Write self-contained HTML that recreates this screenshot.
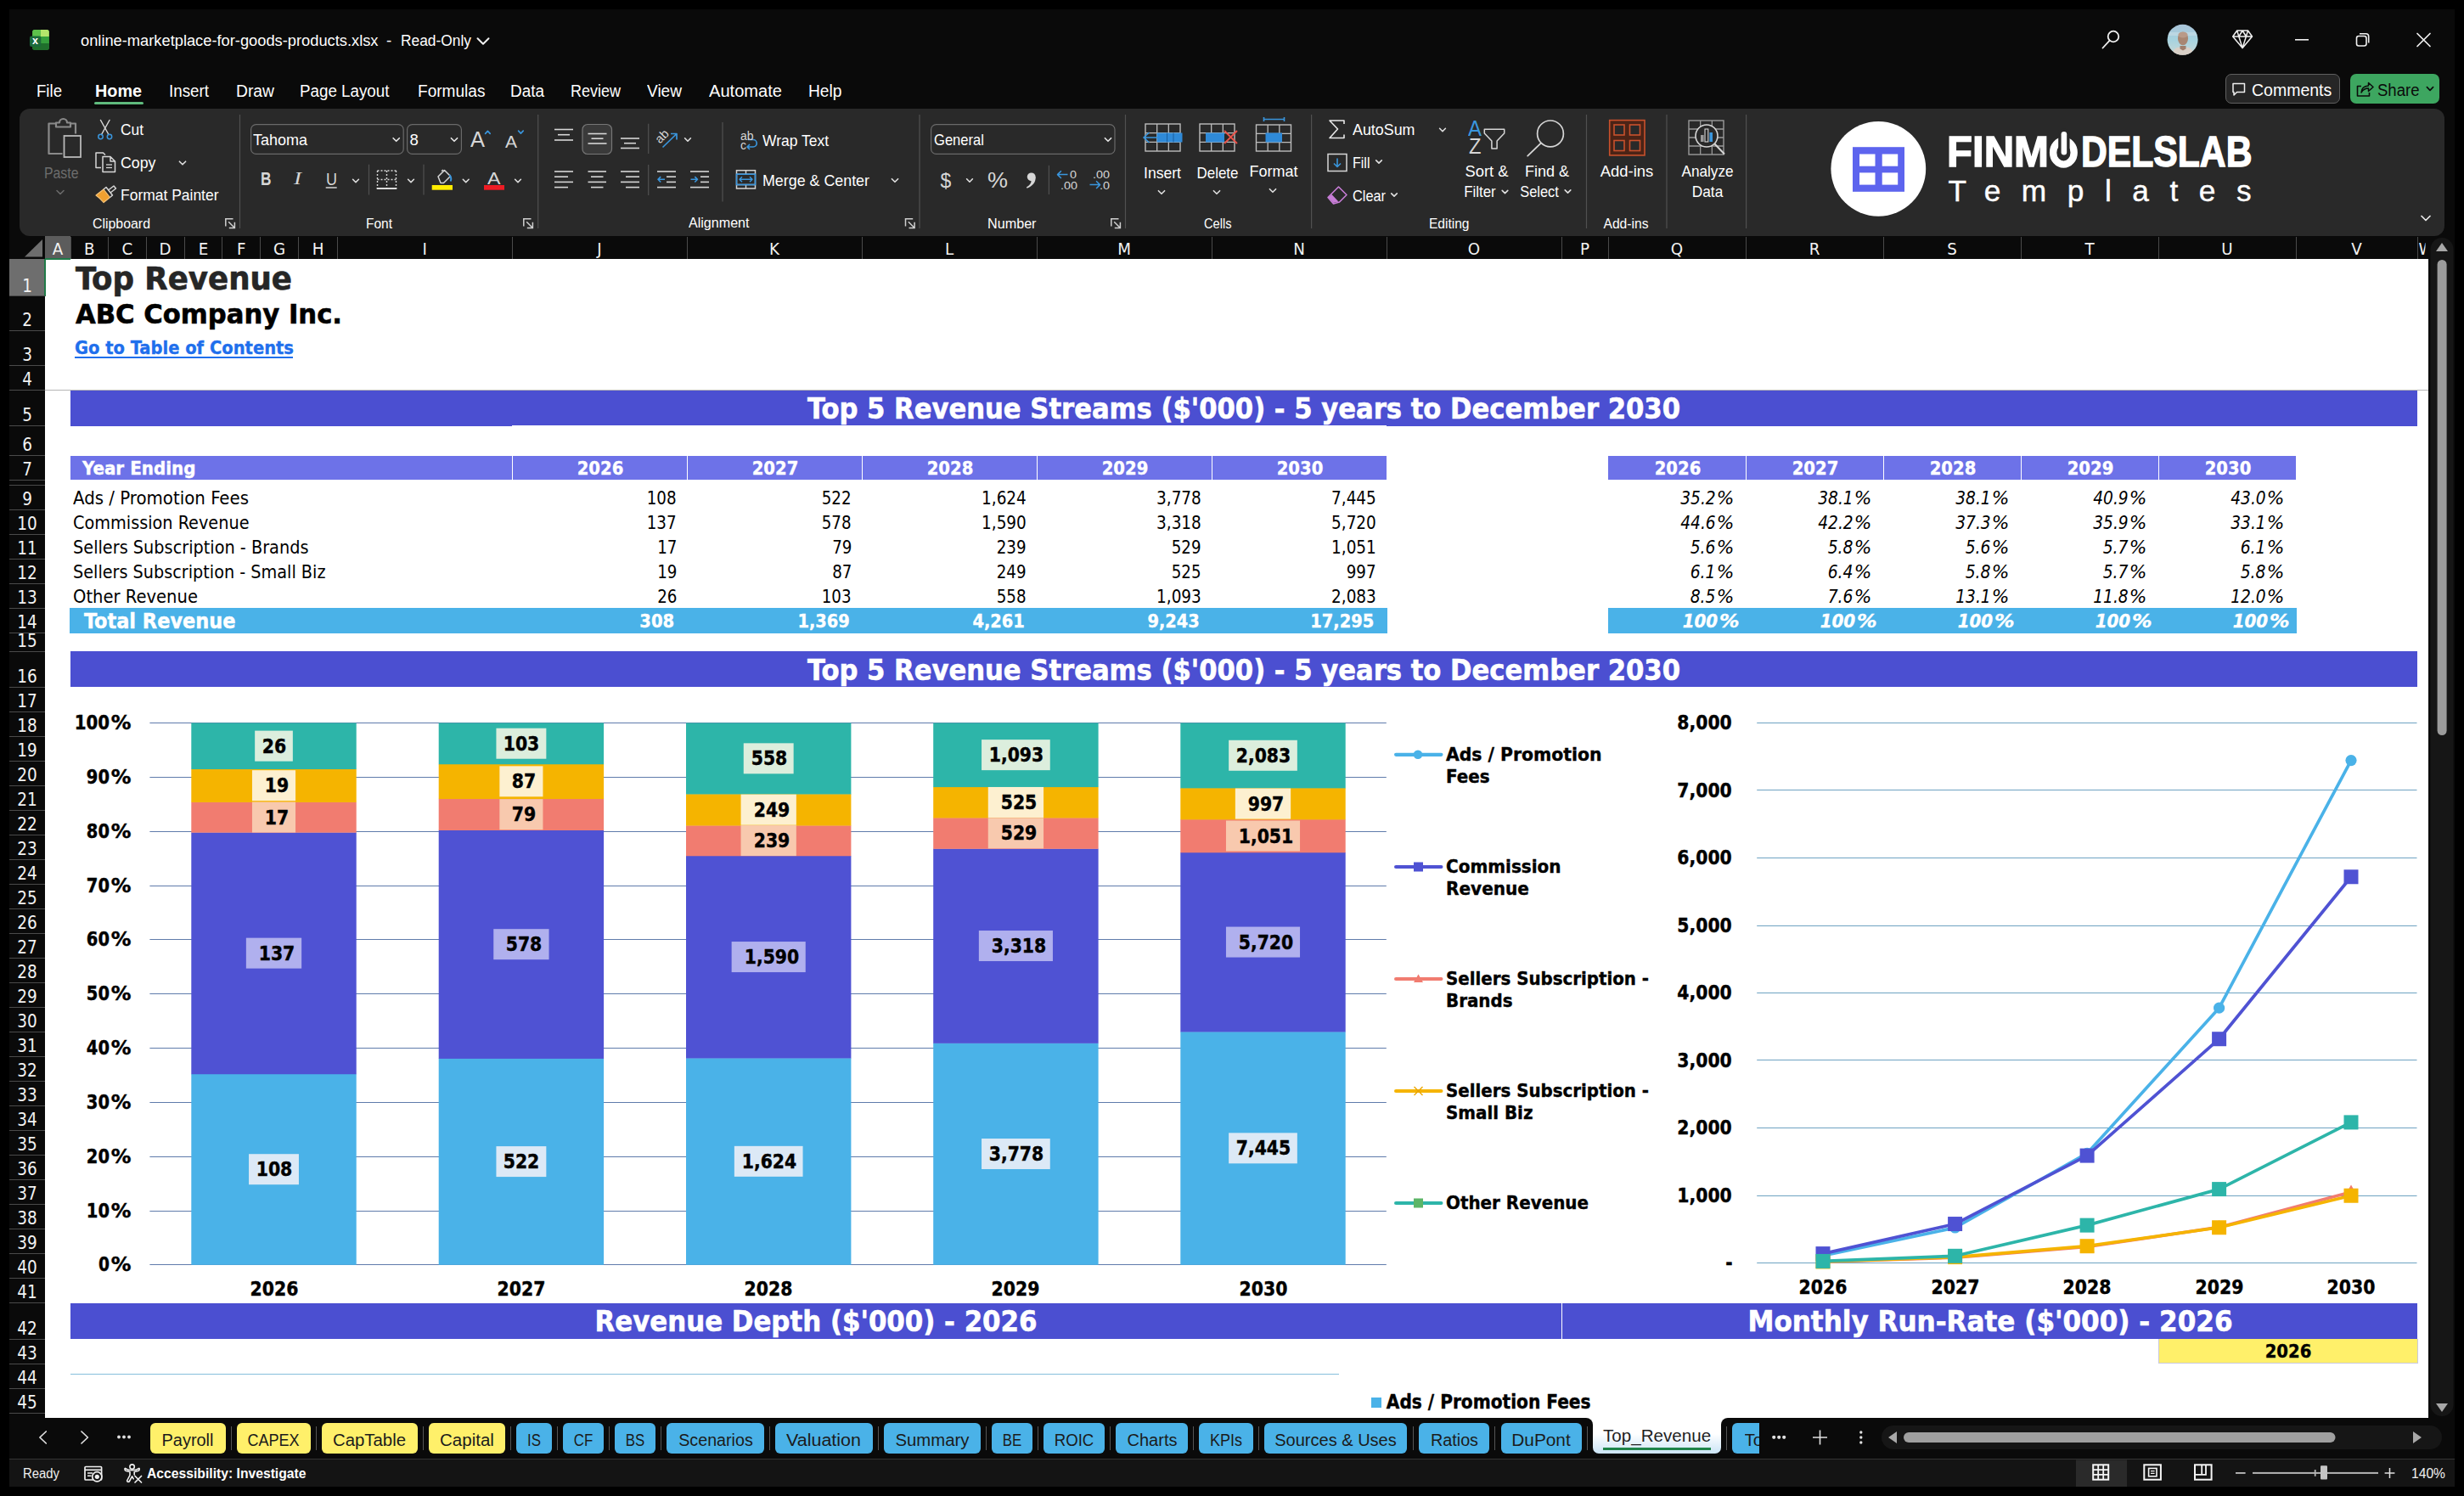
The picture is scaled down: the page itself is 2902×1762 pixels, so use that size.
<!DOCTYPE html>
<html lang="en"><head><meta charset="utf-8"><title>online-marketplace-for-goods-products.xlsx - Excel</title><style>
html,body{margin:0;padding:0;background:#000;}
body{width:2902px;height:1762px;position:relative;overflow:hidden;font-family:'Liberation Sans',sans-serif;}
#app div,#app span,#app svg{position:absolute;}
#app section{display:contents;}
#app span{white-space:nowrap;}
#app svg{overflow:visible;}
</style></head>
<body><div id="app">
<section id="window">
<div style="left:11px;top:11px;width:2880px;height:1740px;background:#0a0a0a;"></div>
</section>
<section id="titlebar">
<svg style="left:0px;top:0px;" width="2902" height="1762" viewBox="0 0 2902 1762"><rect x="38.2" y="35" width="19.6" height="23.8" rx="2.5" fill="#2f9438"/><path d="M38.2 43 v-5.5 a2.5 2.5 0 0 1 2.5 -2.5 h7.3 v8 z" fill="#5dc04b"/><path d="M48 35 h7.3 a2.5 2.5 0 0 1 2.5 2.5 v5.5 h-9.8 z" fill="#b4e66b"/><rect x="38.2" y="43" width="9.8" height="8" fill="#237f33"/><rect x="48" y="43" width="9.8" height="8" fill="#35a03c"/><path d="M38.2 51 h19.6 v5.3 a2.5 2.5 0 0 1 -2.5 2.5 h-14.6 a2.5 2.5 0 0 1 -2.5 -2.5 z" fill="#1f6f2c"/><rect x="35" y="42.5" width="13.3" height="12.4" rx="2" fill="#1b6a3b"/></svg>
<span id="t0" style="top:41.72px;font-size:12.5px;line-height:12.5px;color:#fff;font-weight:bold;left:41.6px;transform:translateX(-50%);">x</span>
<span id="t1" style="top:39px;font-size:18.8px;line-height:18.8px;color:#ffffff;left:95px;transform:scaleX(0.9732);transform-origin:0 50%;">online-marketplace-for-goods-products.xlsx</span>
<span id="t2" style="top:39px;font-size:18.8px;line-height:18.8px;color:#ffffff;left:455px;">-</span>
<span id="t3" style="top:39px;font-size:18.8px;line-height:18.8px;color:#ffffff;left:472px;transform:scaleX(0.9245);transform-origin:0 50%;">Read-Only</span>
<svg style="left:0px;top:0px;" width="2902" height="1762" viewBox="0 0 2902 1762"><path d="M562.5 45.25 l6.5 6.5 l6.5 -6.5" fill="none" stroke="#f0f0f0" stroke-width="2" stroke-linecap="round" stroke-linejoin="round"/><circle cx="2489" cy="43" r="6.3" fill="none" stroke="#f0f0f0" stroke-width="1.8"/><path d="M2484.5 47.8 L2476.5 56.5" stroke="#f0f0f0" stroke-width="1.8" stroke-linecap="round"/><defs><linearGradient id="av" x1="0" y1="0" x2="0" y2="1"><stop offset="0" stop-color="#a9c3d8"/><stop offset="0.5" stop-color="#a6d3df"/><stop offset="1" stop-color="#c9d8d6"/></linearGradient><clipPath id="avc"><circle cx="2570.6" cy="46.8" r="18"/></clipPath></defs><circle cx="2570.6" cy="46.8" r="18" fill="url(#av)"/><g clip-path="url(#avc)"><rect x="2552" y="38" width="38" height="4" fill="#c8dde8" opacity="0.6"/><ellipse cx="2571" cy="45.5" rx="6" ry="7.8" fill="#a88672"/><ellipse cx="2571" cy="41" rx="5.6" ry="3.6" fill="#b99a88"/><path d="M2558 66 q1 -9 8 -10.5 l5 3 l5 -3 q7 1.5 8 10.5 z" fill="#d9d0c7"/><path d="M2567.5 54 h7 v3.5 l-3.5 2 l-3.5 -2 z" fill="#a07f6c"/></g><path d="M2634.7 36 h12.8 l5 7 l-11.4 13.6 l-11.4 -13.6 z M2629.7 43 h22.8 M2636.8 43 l4.3 13.6 l4.3 -13.6 M2634.7 36 l2.1 7 l4.3 -7 l4.3 7 l2.1 -7" fill="none" stroke="#f0f0f0" stroke-width="1.5" stroke-linejoin="round"/><rect x="2703" y="46" width="16" height="1.6" fill="#f0f0f0"/><rect x="2775.5" y="42.5" width="11.5" height="11.5" rx="2.5" fill="none" stroke="#f0f0f0" stroke-width="1.6"/><path d="M2779 39.8 h7.5 a3.2 3.2 0 0 1 3.2 3.2 v7.5" fill="none" stroke="#f0f0f0" stroke-width="1.6"/><path d="M2847 39.5 l15 15 m0 -15 l-15 15" stroke="#f0f0f0" stroke-width="1.7" stroke-linecap="round"/></svg>
</section>
<section id="menubar">
<span id="t4" style="top:97.18px;font-size:20px;line-height:20px;color:#ffffff;left:42.5px;transform:scaleX(0.9307);transform-origin:0 50%;">File</span>
<span id="t5" style="top:97.18px;font-size:20px;line-height:20px;color:#ffffff;font-weight:bold;left:111.5px;transform:scaleX(0.9896);transform-origin:0 50%;">Home</span>
<span id="t6" style="top:97.18px;font-size:20px;line-height:20px;color:#ffffff;left:198.7px;transform:scaleX(0.9394);transform-origin:0 50%;">Insert</span>
<span id="t7" style="top:97.18px;font-size:20px;line-height:20px;color:#ffffff;left:277.5px;transform:scaleX(0.9642);transform-origin:0 50%;">Draw</span>
<span id="t8" style="top:97.18px;font-size:20px;line-height:20px;color:#ffffff;left:353px;transform:scaleX(0.9392);transform-origin:0 50%;">Page Layout</span>
<span id="t9" style="top:97.18px;font-size:20px;line-height:20px;color:#ffffff;left:491.7px;transform:scaleX(0.9537);transform-origin:0 50%;">Formulas</span>
<span id="t10" style="top:97.18px;font-size:20px;line-height:20px;color:#ffffff;left:600.6px;transform:scaleX(0.9467);transform-origin:0 50%;">Data</span>
<span id="t11" style="top:97.18px;font-size:20px;line-height:20px;color:#ffffff;left:671.7px;transform:scaleX(0.8997);transform-origin:0 50%;">Review</span>
<span id="t12" style="top:97.18px;font-size:20px;line-height:20px;color:#ffffff;left:762px;transform:scaleX(0.9535);transform-origin:0 50%;">View</span>
<span id="t13" style="top:97.18px;font-size:20px;line-height:20px;color:#ffffff;left:834.8px;transform:scaleX(1.0046);transform-origin:0 50%;">Automate</span>
<span id="t14" style="top:97.18px;font-size:20px;line-height:20px;color:#ffffff;left:951.7px;transform:scaleX(0.9601);transform-origin:0 50%;">Help</span>
<div style="left:111px;top:120px;width:58px;height:3px;background:#5fba7d;border-radius:1.5px;"></div>
<div style="left:2621px;top:87px;width:134.6px;height:35.4px;background:#262626;box-sizing:border-box;border:1.3px solid #606060;border-radius:7px;"></div>
<span id="t15" style="top:97px;font-size:19.5px;line-height:19.5px;color:#ffffff;left:2652px;">Comments</span>
<div style="left:2768px;top:87px;width:105px;height:35.4px;background:#3da660;border-radius:7px;"></div>
<span id="t16" style="top:97px;font-size:19.5px;line-height:19.5px;color:#0b0b0b;left:2799.5px;transform:scaleX(0.9511);transform-origin:0 50%;">Share</span>
<svg style="left:0px;top:0px;" width="2902" height="1762" viewBox="0 0 2902 1762"><path d="M2630 98.5 h13.5 v10 h-9 l-3.5 3.5 v-3.5 h-1 z" fill="none" stroke="#f0f0f0" stroke-width="1.5" stroke-linejoin="round"/><path d="M2781 101.5 h-4.5 v11.5 h14 v-4" fill="none" stroke="#0b0b0b" stroke-width="1.6" stroke-linejoin="round"/><path d="M2781 109 q0.5 -7.5 8.5 -8 v-3.5 l5.5 5 l-5.5 5 v-3.4 q-5.5 0 -8.5 4.9 z" fill="none" stroke="#0b0b0b" stroke-width="1.5" stroke-linejoin="round"/><path d="M2858.4 102.7 l3.6 3.6 l3.6 -3.6" fill="none" stroke="#0b0b0b" stroke-width="1.7" stroke-linecap="round" stroke-linejoin="round"/></svg>
</section>
<section id="ribbon">
<div style="left:23px;top:128px;width:2855.5px;height:149.5px;background:#292929;border-radius:12px;"></div>
<svg style="left:0px;top:0px;" width="2902" height="1762" viewBox="0 0 2902 1762"><rect x="281.9" y="135" width="1.2" height="134" fill="#505050"/><rect x="633.1" y="135" width="1.2" height="134" fill="#505050"/><rect x="1082.4" y="135" width="1.2" height="134" fill="#505050"/><rect x="1324.9" y="135" width="1.2" height="134" fill="#505050"/><rect x="1544" y="135" width="1.2" height="134" fill="#505050"/><rect x="1867.9" y="135" width="1.2" height="134" fill="#505050"/><rect x="1962.4" y="135" width="1.2" height="134" fill="#505050"/><rect x="2056" y="135" width="1.2" height="134" fill="#505050"/><rect x="433.9" y="193.7" width="1.2" height="35.8" fill="#505050"/><rect x="498.4" y="193.7" width="1.2" height="35.8" fill="#505050"/><rect x="763.1" y="145.7" width="1.2" height="35.3" fill="#505050"/><rect x="763.1" y="194" width="1.2" height="36" fill="#505050"/><rect x="850.4" y="144" width="1.2" height="93.5" fill="#505050"/><rect x="1234.8" y="194.8" width="1.2" height="34.2" fill="#505050"/><g fill="none" stroke="#8a8a8a" stroke-width="2.2" stroke-linejoin="round"><path d="M67 145.5 h-9.5 v35.5 h16"/><path d="M83 145.5 h6 v12"/><path d="M66 149.5 v-5 h4 a4.5 4.5 0 0 1 9 0 h4 v5 z"/></g><rect x="75.5" y="160" width="19.5" height="25" fill="none" stroke="#b8b8b8" stroke-width="1.8"/><path d="M67 224.5 l4 4 l4 -4" fill="none" stroke="#6a6a6a" stroke-width="1.6" stroke-linecap="round" stroke-linejoin="round"/><path d="M118.5 141.5 l9.5 17 M129 141.5 l-9.5 17" stroke="#d6d6d6" stroke-width="1.5" stroke-linecap="round"/><circle cx="118.5" cy="161" r="2.7" fill="none" stroke="#3a96dd" stroke-width="1.5"/><circle cx="129" cy="161" r="2.7" fill="none" stroke="#3a96dd" stroke-width="1.5"/><path d="M119 197.5 h-6 v-17.5 h8.5 l2.5 2.5" fill="none" stroke="#d6d6d6" stroke-width="1.5" stroke-linejoin="round"/><path d="M121 184.5 h9 l5.5 5.5 v12.5 h-14.5 z M130 184.5 v5.5 h5.5" fill="none" stroke="#d6d6d6" stroke-width="1.5" stroke-linejoin="round"/><path d="M125 194 H132" stroke="#d6d6d6" stroke-width="1.3"/><path d="M125 197.5 H132" stroke="#d6d6d6" stroke-width="1.3"/><path d="M211.4 190.2 l3.6 3.6 l3.6 -3.6" fill="none" stroke="#e0e0e0" stroke-width="1.6" stroke-linecap="round" stroke-linejoin="round"/><path d="M113 230 l9 -7 l7.5 9.5 l-7.5 6 q-4 -5 -9 -8.5 z" fill="#f0a030" stroke="#f5c37a" stroke-width="1.2" stroke-linejoin="round"/><path d="M122 223 l3 -2.5 l7.5 9.5 l-3 2.5 M127.5 224 l6.5 -5 l2.5 3 l-6.5 5" fill="none" stroke="#d6d6d6" stroke-width="1.5" stroke-linejoin="round"/><path d="M265.8 266.5 v-8.7 h8.7" fill="none" stroke="#d0d0d0" stroke-width="1.5"/><path d="M269.2 261.2 l7 7 M276.4 261.8 v6.6 h-6.6" fill="none" stroke="#d0d0d0" stroke-width="1.5"/><rect x="295.6" y="146.6" width="179.6" height="34.8" rx="6" fill="none" stroke="#6a6a6a" stroke-width="1.2"/><rect x="479.6" y="146.6" width="63.8" height="34.8" rx="6" fill="none" stroke="#6a6a6a" stroke-width="1.2"/><path d="M463.1 162.7 l3.6 3.6 l3.6 -3.6" fill="none" stroke="#e8e8e8" stroke-width="1.6" stroke-linecap="round" stroke-linejoin="round"/><path d="M531.4 162.7 l3.6 3.6 l3.6 -3.6" fill="none" stroke="#e8e8e8" stroke-width="1.6" stroke-linecap="round" stroke-linejoin="round"/><path d="M571.6 157.3 l2.8 -2.9 l2.8 2.9" fill="none" stroke="#3a96dd" stroke-width="1.7" stroke-linecap="round" stroke-linejoin="round"/><path d="M610.6 154.2 l2.8 2.9 l2.8 -2.9" fill="none" stroke="#3a96dd" stroke-width="1.7" stroke-linecap="round" stroke-linejoin="round"/><path d="M383.7 221 H396.7" stroke="#d6d6d6" stroke-width="1.5"/><path d="M415.6 211.3 l3.4 3.4 l3.4 -3.4" fill="none" stroke="#e0e0e0" stroke-width="1.6" stroke-linecap="round" stroke-linejoin="round"/><path d="M480.6 211.3 l3.4 3.4 l3.4 -3.4" fill="none" stroke="#e0e0e0" stroke-width="1.6" stroke-linecap="round" stroke-linejoin="round"/><path d="M545.3 211.3 l3.4 3.4 l3.4 -3.4" fill="none" stroke="#e0e0e0" stroke-width="1.6" stroke-linecap="round" stroke-linejoin="round"/><path d="M606.6 211.3 l3.4 3.4 l3.4 -3.4" fill="none" stroke="#e0e0e0" stroke-width="1.6" stroke-linecap="round" stroke-linejoin="round"/><g stroke="#d6d6d6" stroke-width="1.4" stroke-dasharray="2 2" fill="none"><path d="M444.5 201 h22 M444.5 201 v21 M466.5 201 v21 M455.5 201 v21 M444.5 211.5 h22"/></g><path d="M443.7 222 H467.3" stroke="#f0f0f0" stroke-width="1.8"/><path d="M516 208 l7.5 -7.5 l7 7 l-8 8 h-3.5 z M520 201.5 l2 -1.5" fill="none" stroke="#d6d6d6" stroke-width="1.5" stroke-linejoin="round"/><path d="M529.5 206 q3 4.5 1 7.5" fill="none" stroke="#3a96dd" stroke-width="2"/><rect x="508.7" y="218" width="24.3" height="5.7" fill="#ffec00"/><rect x="570" y="218" width="24" height="5.7" fill="#ee1c24"/><path d="M616.8 266.5 v-8.7 h8.7" fill="none" stroke="#d0d0d0" stroke-width="1.5"/><path d="M620.2 261.2 l7 7 M627.4 261.8 v6.6 h-6.6" fill="none" stroke="#d0d0d0" stroke-width="1.5"/><path d="M653 152.5 H675" stroke="#d6d6d6" stroke-width="1.6"/><path d="M657 158.7 H671" stroke="#d6d6d6" stroke-width="1.6"/><path d="M653 165 H675" stroke="#d6d6d6" stroke-width="1.6"/><path d="M692.5 157.5 H714.5" stroke="#d6d6d6" stroke-width="1.6"/><path d="M696.5 163.2 H710.5" stroke="#d6d6d6" stroke-width="1.6"/><path d="M692.5 169 H714.5" stroke="#d6d6d6" stroke-width="1.6"/><path d="M731 163 H753" stroke="#d6d6d6" stroke-width="1.6"/><path d="M735 168.7 H749" stroke="#d6d6d6" stroke-width="1.6"/><path d="M731 174.5 H753" stroke="#d6d6d6" stroke-width="1.6"/><rect x="686" y="146.5" width="34.5" height="35" rx="6" fill="#3a3a3a" stroke="#777" stroke-width="1.2"/><path d="M692.5 157.5 H714.5" stroke="#d6d6d6" stroke-width="1.6"/><path d="M696.5 163.2 H710.5" stroke="#d6d6d6" stroke-width="1.6"/><path d="M692.5 169 H714.5" stroke="#d6d6d6" stroke-width="1.6"/><path d="M653 202 H675" stroke="#d6d6d6" stroke-width="1.6"/><path d="M653 208.2 H669" stroke="#d6d6d6" stroke-width="1.6"/><path d="M653 214.4 H675" stroke="#d6d6d6" stroke-width="1.6"/><path d="M653 220.6 H669" stroke="#d6d6d6" stroke-width="1.6"/><path d="M692.5 202 H714" stroke="#d6d6d6" stroke-width="1.6"/><path d="M696 208.2 H710.5" stroke="#d6d6d6" stroke-width="1.6"/><path d="M692.5 214.4 H714" stroke="#d6d6d6" stroke-width="1.6"/><path d="M696 220.6 H710.5" stroke="#d6d6d6" stroke-width="1.6"/><path d="M731 202 H753" stroke="#d6d6d6" stroke-width="1.6"/><path d="M737 208.2 H753" stroke="#d6d6d6" stroke-width="1.6"/><path d="M731 214.4 H753" stroke="#d6d6d6" stroke-width="1.6"/><path d="M737 220.6 H753" stroke="#d6d6d6" stroke-width="1.6"/><path d="M774 202 H796" stroke="#d6d6d6" stroke-width="1.6"/><path d="M785 208.2 H796" stroke="#d6d6d6" stroke-width="1.6"/><path d="M785 214.4 H796" stroke="#d6d6d6" stroke-width="1.6"/><path d="M774 220.6 H796" stroke="#d6d6d6" stroke-width="1.6"/><path d="M783 211.3 h-8 m3.2 -3.2 l-3.2 3.2 l3.2 3.2" fill="none" stroke="#3a96dd" stroke-width="1.6" stroke-linejoin="round"/><path d="M813 202 H835" stroke="#d6d6d6" stroke-width="1.6"/><path d="M825 208.2 H835" stroke="#d6d6d6" stroke-width="1.6"/><path d="M825 214.4 H835" stroke="#d6d6d6" stroke-width="1.6"/><path d="M813 220.6 H835" stroke="#d6d6d6" stroke-width="1.6"/><path d="M813.5 211.3 h8 m-3.2 -3.2 l3.2 3.2 l-3.2 3.2" fill="none" stroke="#3a96dd" stroke-width="1.6" stroke-linejoin="round"/><path d="M780.5 173.5 l16.5 -16 m-7 0 h7 v7" fill="none" stroke="#3a96dd" stroke-width="1.7" stroke-linejoin="round"/><path d="M806.6 162.8 l3.4 3.4 l3.4 -3.4" fill="none" stroke="#e0e0e0" stroke-width="1.6" stroke-linecap="round" stroke-linejoin="round"/><path d="M881 164.5 h6 a4 4 0 0 1 0 8.5 h-7 m3 -3 l-3 3 l3 3" fill="none" stroke="#3a96dd" stroke-width="1.7" stroke-linejoin="round"/><rect x="867.5" y="200.7" width="22" height="21.3" fill="none" stroke="#d6d6d6" stroke-width="1.5"/><path d="M867.5 205.2 h22 M867.5 217.5 h22 M878.5 200.7 v4.5 M878.5 217.5 v4.5" stroke="#d6d6d6" stroke-width="1.4"/><rect x="867.5" y="205.2" width="22" height="12.3" fill="none" stroke="#3a96dd" stroke-width="1.6"/><path d="M871 211.3 h15 m-3 -3 l3 3 l-3 3 M874 208.3 l-3 3 l3 3" fill="none" stroke="#3a96dd" stroke-width="1.5" stroke-linejoin="round"/><path d="M1050.4 210.7 l3.6 3.6 l3.6 -3.6" fill="none" stroke="#e0e0e0" stroke-width="1.6" stroke-linecap="round" stroke-linejoin="round"/><path d="M1066.5 266.5 v-8.7 h8.7" fill="none" stroke="#d0d0d0" stroke-width="1.5"/><path d="M1069.9 261.2 l7 7 M1077.1 261.8 v6.6 h-6.6" fill="none" stroke="#d0d0d0" stroke-width="1.5"/><rect x="1096.6" y="146.6" width="216.4" height="34.8" rx="6" fill="none" stroke="#6a6a6a" stroke-width="1.2"/><path d="M1301.4 162.7 l3.6 3.6 l3.6 -3.6" fill="none" stroke="#e8e8e8" stroke-width="1.6" stroke-linecap="round" stroke-linejoin="round"/><path d="M1138.6 210.8 l3.4 3.4 l3.4 -3.4" fill="none" stroke="#e0e0e0" stroke-width="1.6" stroke-linecap="round" stroke-linejoin="round"/><path d="M1257.5 205.6 h-12 m4.4 -4.4 l-4.4 4.4 l4.4 4.4" fill="none" stroke="#3a96dd" stroke-width="1.5" stroke-linejoin="round"/><path d="M1283.5 217.6 h12 m-4.4 -4.4 l4.4 4.4 l-4.4 4.4" fill="none" stroke="#3a96dd" stroke-width="1.5" stroke-linejoin="round"/><circle cx="1214.7" cy="208.3" r="4.9" fill="#d6d6d6"/><path d="M1219.6 208.3 C1220.2 214.5 1216 219.5 1209.6 221.8 L1208.9 220.5 C1212.8 218.3 1214.8 215.5 1214.6 212.5 Z" fill="#d6d6d6"/><path d="M1308.8 266.5 v-8.7 h8.7" fill="none" stroke="#d0d0d0" stroke-width="1.5"/><path d="M1312.2 261.2 l7 7 M1319.4 261.8 v6.6 h-6.6" fill="none" stroke="#d0d0d0" stroke-width="1.5"/><rect x="1349" y="146" width="41" height="32" fill="none" stroke="#bdbdbd" stroke-width="1.4"/><path d="M1362.67 146 v32" stroke="#bdbdbd" stroke-width="1.3"/><path d="M1376.33 146 v32" stroke="#bdbdbd" stroke-width="1.3"/><path d="M1349 156.67 h41" stroke="#bdbdbd" stroke-width="1.3"/><path d="M1349 167.33 h41" stroke="#bdbdbd" stroke-width="1.3"/><rect x="1362.5" y="156.5" width="30" height="11" fill="#2f8ad8"/><path d="M1374.5 156.5 v11 M1382 156.5 v11" stroke="#1a5fa0" stroke-width="1"/><path d="M1363 162 h-16 m6.5 -6 l-6.5 6 l6.5 6" fill="none" stroke="#3a96dd" stroke-width="1.7" stroke-linejoin="round"/><rect x="1413" y="146" width="41" height="32" fill="none" stroke="#bdbdbd" stroke-width="1.4"/><path d="M1426.67 146 v32" stroke="#bdbdbd" stroke-width="1.3"/><path d="M1440.33 146 v32" stroke="#bdbdbd" stroke-width="1.3"/><path d="M1413 156.67 h41" stroke="#bdbdbd" stroke-width="1.3"/><path d="M1413 167.33 h41" stroke="#bdbdbd" stroke-width="1.3"/><rect x="1420" y="156.5" width="22" height="11" fill="#2f8ad8"/><path d="M1442 154 l15 15 m0 -15 l-15 15" stroke="#e8534a" stroke-width="1.9"/><rect x="1479.5" y="147" width="41" height="31" fill="none" stroke="#bdbdbd" stroke-width="1.4"/><path d="M1493.17 147 v31" stroke="#bdbdbd" stroke-width="1.3"/><path d="M1506.83 147 v31" stroke="#bdbdbd" stroke-width="1.3"/><path d="M1479.5 157.33 h41" stroke="#bdbdbd" stroke-width="1.3"/><path d="M1479.5 167.67 h41" stroke="#bdbdbd" stroke-width="1.3"/><rect x="1490.5" y="156.5" width="19.5" height="11" fill="#2f8ad8"/><path d="M1488.5 140.5 h24 M1488.5 138 v5 M1512.5 138 v5" stroke="#3a96dd" stroke-width="1.6"/><path d="M1364.4 224.7 l3.6 3.6 l3.6 -3.6" fill="none" stroke="#e0e0e0" stroke-width="1.6" stroke-linecap="round" stroke-linejoin="round"/><path d="M1429.4 224.7 l3.6 3.6 l3.6 -3.6" fill="none" stroke="#e0e0e0" stroke-width="1.6" stroke-linecap="round" stroke-linejoin="round"/><path d="M1495.4 222.7 l3.6 3.6 l3.6 -3.6" fill="none" stroke="#e0e0e0" stroke-width="1.6" stroke-linecap="round" stroke-linejoin="round"/><path d="M1583 146 v-4 h-17 l9.5 10 l-9.5 10.5 h17 v-4" fill="none" stroke="#e8e8e8" stroke-width="1.6" stroke-linejoin="round"/><path d="M1695.6 151.3 l3.4 3.4 l3.4 -3.4" fill="none" stroke="#e0e0e0" stroke-width="1.6" stroke-linecap="round" stroke-linejoin="round"/><path d="M1564 187 v-5.5 h22 v20 h-22 v-14.5" fill="none" stroke="#d6d6d6" stroke-width="1.5"/><path d="M1575 186.5 v10 m-4 -4 l4 4 l4 -4" fill="none" stroke="#3a96dd" stroke-width="1.6" stroke-linejoin="round"/><path d="M1620.7 188.85 l3.3 3.3 l3.3 -3.3" fill="none" stroke="#e0e0e0" stroke-width="1.6" stroke-linecap="round" stroke-linejoin="round"/><path d="M1564 232.5 l12.5 -12.5 l9.5 9.5 l-8.5 8.5 l-7 2 z" fill="none" stroke="#c77dd6" stroke-width="1.6" stroke-linejoin="round"/><path d="M1564.5 232.5 l6 6.5 l6 -1.5 l-8 -8.5 z" fill="#c77dd6"/><path d="M1638.7 227.85 l3.3 3.3 l3.3 -3.3" fill="none" stroke="#e0e0e0" stroke-width="1.6" stroke-linecap="round" stroke-linejoin="round"/><path d="M1748.3 152.3 h23.4 v4.6 l-8.6 9 v9 h-6.2 v-9 l-8.6 -9 z" fill="none" stroke="#d6d6d6" stroke-width="1.5" stroke-linejoin="round"/><path d="M1769.2 224.35 l3.3 3.3 l3.3 -3.3" fill="none" stroke="#e0e0e0" stroke-width="1.6" stroke-linecap="round" stroke-linejoin="round"/><circle cx="1826" cy="157.4" r="15.4" fill="none" stroke="#d6d6d6" stroke-width="1.7"/><path d="M1814.8 168.6 l-15.6 15" stroke="#d6d6d6" stroke-width="1.8" stroke-linecap="round"/><path d="M1843.2 223.85 l3.3 3.3 l3.3 -3.3" fill="none" stroke="#e0e0e0" stroke-width="1.6" stroke-linecap="round" stroke-linejoin="round"/><rect x="1895.7" y="141.6" width="41.3" height="41.3" fill="#4b2316" stroke="#c9512c" stroke-width="1.6"/><rect x="1901" y="147" width="12" height="12" fill="#292929" stroke="#c9512c" stroke-width="1.6"/><rect x="1919.5" y="147" width="12" height="12" fill="#292929" stroke="#c9512c" stroke-width="1.6"/><rect x="1901" y="165.5" width="12" height="12" fill="#292929" stroke="#c9512c" stroke-width="1.6"/><rect x="1919.5" y="165.5" width="12" height="12" fill="#292929" stroke="#c9512c" stroke-width="1.6"/><rect x="1989" y="142" width="41" height="40" fill="none" stroke="#9a9a9a" stroke-width="1.4"/><path d="M2002.67 142 v40" stroke="#9a9a9a" stroke-width="1.3"/><path d="M2016.33 142 v40" stroke="#9a9a9a" stroke-width="1.3"/><path d="M1989 152 h41" stroke="#9a9a9a" stroke-width="1.3"/><path d="M1989 162 h41" stroke="#9a9a9a" stroke-width="1.3"/><path d="M1989 172 h41" stroke="#9a9a9a" stroke-width="1.3"/><circle cx="2010" cy="160" r="13" fill="#292929" stroke="#d6d6d6" stroke-width="1.6"/><path d="M2019.5 169.5 l11.5 12" stroke="#d6d6d6" stroke-width="2"/><rect x="2003" y="159" width="3.6" height="8" fill="#9a9a9a"/><rect x="2008" y="152" width="3.8" height="15" fill="none" stroke="#d6d6d6" stroke-width="1.1"/><rect x="2013.4" y="156" width="3.6" height="11" fill="#3a96dd"/><path d="M2852 254.5 l5 5 l5 -5" fill="none" stroke="#e8e8e8" stroke-width="1.7" stroke-linecap="round" stroke-linejoin="round"/><circle cx="2212.3" cy="198.8" r="55.9" fill="#fff"/><rect x="2182" y="173.2" width="61" height="52.6" fill="#5d64ee"/><rect x="2190" y="181.5" width="18.5" height="14.2" fill="#fff"/><rect x="2216.7" y="181.5" width="18.5" height="14.2" fill="#fff"/><rect x="2190" y="203.4" width="18.5" height="14.2" fill="#fff"/><rect x="2216.7" y="203.4" width="18.5" height="14.2" fill="#fff"/></svg>
<span id="t17" style="top:194.66px;font-size:18.6px;line-height:18.6px;color:#6d6d6d;left:52px;transform:scaleX(0.8518);transform-origin:0 50%;">Paste</span>
<span id="t18" style="top:144.16px;font-size:18.6px;line-height:18.6px;color:#fff;left:142px;transform:scaleX(0.933);transform-origin:0 50%;">Cut</span>
<span id="t19" style="top:183.16px;font-size:18.6px;line-height:18.6px;color:#fff;left:142px;transform:scaleX(0.9557);transform-origin:0 50%;">Copy</span>
<span id="t20" style="top:221.16px;font-size:18.6px;line-height:18.6px;color:#fff;left:142px;transform:scaleX(0.9393);transform-origin:0 50%;">Format Painter</span>
<span id="t21" style="top:255.69px;font-size:16.8px;line-height:16.8px;color:#fff;left:109px;transform:scaleX(0.9465);transform-origin:0 50%;">Clipboard</span>
<span id="t22" style="top:155.86px;font-size:18.6px;line-height:18.6px;color:#fff;left:298px;transform:scaleX(0.9674);transform-origin:0 50%;">Tahoma</span>
<span id="t23" style="top:155.86px;font-size:18.6px;line-height:18.6px;color:#fff;left:482.5px;">8</span>
<span id="t24" style="top:152.25px;font-size:25px;line-height:25px;color:#d6d6d6;left:554px;transform:scaleX(1.0187);transform-origin:0 50%;">A</span>
<span id="t25" style="top:155.63px;font-size:21px;line-height:21px;color:#d6d6d6;left:595px;">A</span>
<span id="t26" style="top:199.79px;font-size:22px;line-height:22px;color:#d6d6d6;font-weight:bold;left:307px;transform:scaleX(0.7866);transform-origin:0 50%;">B</span>
<span id="t27" style="top:198.89px;font-size:22px;line-height:22px;color:#d6d6d6;font-family:'Liberation Serif',serif;font-style:italic;left:346px;transform:scaleX(1.2281);transform-origin:0 50%;">I</span>
<span id="t28" style="top:199.63px;font-size:21px;line-height:21px;color:#d6d6d6;left:383.7px;transform:scaleX(0.8568);transform-origin:0 50%;">U</span>
<span id="t29" style="top:198.63px;font-size:21px;line-height:21px;color:#d6d6d6;left:574.3px;transform:scaleX(1.1059);transform-origin:0 50%;">A</span>
<span id="t30" style="top:255.69px;font-size:16.8px;line-height:16.8px;color:#fff;left:430.5px;transform:scaleX(0.9228);transform-origin:0 50%;">Font</span>
<span id="t31" style="top:157.13px;font-size:14.5px;line-height:14.5px;color:#d6d6d6;left:778.5px;transform:rotate(-45deg);transform-origin:0 100%;">ab</span>
<span id="t32" style="top:152.56px;font-size:14px;line-height:14px;color:#d6d6d6;left:872px;">ab</span>
<span id="t33" style="top:163.56px;font-size:14px;line-height:14px;color:#d6d6d6;left:872px;">c</span>
<span id="t34" style="top:157.16px;font-size:18.6px;line-height:18.6px;color:#fff;left:897.5px;transform:scaleX(0.9394);transform-origin:0 50%;">Wrap Text</span>
<span id="t35" style="top:204.16px;font-size:18.6px;line-height:18.6px;color:#fff;left:897.5px;transform:scaleX(0.96);transform-origin:0 50%;">Merge &amp; Center</span>
<span id="t36" style="top:255.29px;font-size:16.8px;line-height:16.8px;color:#fff;left:810.5px;transform:scaleX(0.9581);transform-origin:0 50%;">Alignment</span>
<span id="t37" style="top:155.86px;font-size:18.6px;line-height:18.6px;color:#fff;left:1099.5px;transform:scaleX(0.8918);transform-origin:0 50%;">General</span>
<span id="t38" style="top:201.94px;font-size:23px;line-height:23px;color:#d6d6d6;left:1107.5px;">$</span>
<span id="t39" style="top:200.25px;font-size:25px;line-height:25px;color:#d6d6d6;left:1163px;transform:scaleX(1.0794);transform-origin:0 50%;">%</span>
<span id="t40" style="top:199.48px;font-size:13.5px;line-height:13.5px;color:#d6d6d6;left:1259.5px;transform:scaleX(1.0644);transform-origin:0 50%;">0</span>
<span id="t41" style="top:211.78px;font-size:13.5px;line-height:13.5px;color:#d6d6d6;left:1248.5px;transform:scaleX(1.0649);transform-origin:0 50%;">.00</span>
<span id="t42" style="top:199.48px;font-size:13.5px;line-height:13.5px;color:#d6d6d6;left:1287px;transform:scaleX(1.0649);transform-origin:0 50%;">.00</span>
<span id="t43" style="top:211.78px;font-size:13.5px;line-height:13.5px;color:#d6d6d6;left:1295px;transform:scaleX(1.0652);transform-origin:0 50%;">.0</span>
<span id="t44" style="top:255.69px;font-size:16.8px;line-height:16.8px;color:#fff;left:1163px;transform:scaleX(0.9634);transform-origin:0 50%;">Number</span>
<span id="t45" style="top:195.36px;font-size:18.6px;line-height:18.6px;color:#fff;left:1369px;transform:translateX(-50%) scaleX(0.9459);transform-origin:50% 50%;">Insert</span>
<span id="t46" style="top:195.36px;font-size:18.6px;line-height:18.6px;color:#fff;left:1434.3px;transform:translateX(-50%) scaleX(0.9116);transform-origin:50% 50%;">Delete</span>
<span id="t47" style="top:192.96px;font-size:18.6px;line-height:18.6px;color:#fff;left:1500.3px;transform:translateX(-50%) scaleX(0.9679);transform-origin:50% 50%;">Format</span>
<span id="t48" style="top:255.69px;font-size:16.8px;line-height:16.8px;color:#fff;left:1418px;transform:scaleX(0.871);transform-origin:0 50%;">Cells</span>
<span id="t49" style="top:144.16px;font-size:18.6px;line-height:18.6px;color:#fff;left:1593.3px;transform:scaleX(0.961);transform-origin:0 50%;">AutoSum</span>
<span id="t50" style="top:183.16px;font-size:18.6px;line-height:18.6px;color:#fff;left:1593.3px;transform:scaleX(0.8626);transform-origin:0 50%;">Fill</span>
<span id="t51" style="top:221.76px;font-size:18.6px;line-height:18.6px;color:#fff;left:1593.3px;transform:scaleX(0.8776);transform-origin:0 50%;">Clear</span>
<span id="t52" style="top:138.85px;font-size:25px;line-height:25px;color:#3a96dd;left:1728.8px;transform:scaleX(0.9588);transform-origin:0 50%;">A</span>
<span id="t53" style="top:159.63px;font-size:25.5px;line-height:25.5px;color:#d6d6d6;left:1729.5px;transform:scaleX(0.9308);transform-origin:0 50%;">Z</span>
<span id="t54" style="top:192.96px;font-size:18.6px;line-height:18.6px;color:#fff;left:1751px;transform:translateX(-50%) scaleX(0.987);transform-origin:50% 50%;">Sort &amp;</span>
<span id="t55" style="top:217.16px;font-size:18.6px;line-height:18.6px;color:#fff;left:1743px;transform:translateX(-50%) scaleX(0.9074);transform-origin:50% 50%;">Filter</span>
<span id="t56" style="top:192.96px;font-size:18.6px;line-height:18.6px;color:#fff;left:1821.5px;transform:translateX(-50%) scaleX(0.9674);transform-origin:50% 50%;">Find &amp;</span>
<span id="t57" style="top:217.16px;font-size:18.6px;line-height:18.6px;color:#fff;left:1813.3px;transform:translateX(-50%) scaleX(0.8803);transform-origin:50% 50%;">Select</span>
<span id="t58" style="top:255.69px;font-size:16.8px;line-height:16.8px;color:#fff;left:1682.6px;transform:scaleX(0.9257);transform-origin:0 50%;">Editing</span>
<span id="t59" style="top:192.96px;font-size:18.6px;line-height:18.6px;color:#fff;left:1916.2px;transform:translateX(-50%) scaleX(0.9913);transform-origin:50% 50%;">Add-ins</span>
<span id="t60" style="top:255.69px;font-size:16.8px;line-height:16.8px;color:#fff;left:1915px;transform:translateX(-50%) scaleX(0.9314);transform-origin:50% 50%;">Add-ins</span>
<span id="t61" style="top:192.96px;font-size:18.6px;line-height:18.6px;color:#fff;left:2010.5px;transform:translateX(-50%) scaleX(0.9221);transform-origin:50% 50%;">Analyze</span>
<span id="t62" style="top:217.16px;font-size:18.6px;line-height:18.6px;color:#fff;left:2010.5px;transform:translateX(-50%) scaleX(0.9292);transform-origin:50% 50%;">Data</span>
<span id="t63" style="top:154.08px;font-size:50.5px;line-height:50.5px;color:#fff;font-weight:bold;left:2293px;transform:scaleX(0.9723);transform-origin:0 50%;-webkit-text-stroke:1.4px #fff;">FINM</span>
<span id="t64" style="top:159.97px;font-size:42px;line-height:42px;color:#fff;font-weight:bold;left:2430.4px;transform:translateX(-50%);">O</span>
<span id="t65" style="top:154.08px;font-size:50.5px;line-height:50.5px;color:#fff;font-weight:bold;left:2450.8px;transform:scaleX(0.8449);transform-origin:0 50%;-webkit-text-stroke:1.4px #fff;">DELSLAB</span>
<span id="t66" style="top:206.84px;font-size:35.3px;line-height:35.3px;color:#fff;letter-spacing:24.52px;left:2294.5px;-webkit-text-stroke:0.4px #fff;">Templates</span>
<svg style="left:0px;top:0px;" width="2902" height="1762" viewBox="0 0 2902 1762"><ellipse cx="2430.4" cy="179.7" rx="16.8" ry="18.6" fill="#292929"/><ellipse cx="2430.4" cy="179.7" rx="12.3" ry="13.9" fill="none" stroke="#fff" stroke-width="8.4"/><rect x="2424.2" y="151.5" width="13.4" height="34" rx="6" fill="#292929"/><rect x="2427.6" y="155" width="6.6" height="27.6" rx="3.3" fill="#fff"/></svg>
</section>
<section id="worksheet">
<div style="left:53px;top:305px;width:2807px;height:1364.6px;background:#fff;"></div>
<div style="left:11px;top:278px;width:2849px;height:27px;background:#0a0a0a;"></div>
<div style="left:53px;top:278px;width:30px;height:27px;background:#5c5c5c;"></div>
<div style="left:53px;top:304px;width:30px;height:2px;background:#1f7a48;"></div>
<span id="t67" style="top:282.53px;font-size:20.3px;line-height:20.3px;color:#f2f2f2;font-family:'DejaVu Sans Condensed','DejaVu Sans',sans-serif;font-stretch:condensed;left:68px;transform:translateX(-50%);">A</span>
<div style="left:82.5px;top:279px;width:1px;height:26px;background:#4a4a4a;"></div>
<span id="t68" style="top:282.53px;font-size:20.3px;line-height:20.3px;color:#f2f2f2;font-family:'DejaVu Sans Condensed','DejaVu Sans',sans-serif;font-stretch:condensed;left:105.3px;transform:translateX(-50%);">B</span>
<div style="left:127.1px;top:279px;width:1px;height:26px;background:#4a4a4a;"></div>
<span id="t69" style="top:282.53px;font-size:20.3px;line-height:20.3px;color:#f2f2f2;font-family:'DejaVu Sans Condensed','DejaVu Sans',sans-serif;font-stretch:condensed;left:149.95px;transform:translateX(-50%);">C</span>
<div style="left:171.8px;top:279px;width:1px;height:26px;background:#4a4a4a;"></div>
<span id="t70" style="top:282.53px;font-size:20.3px;line-height:20.3px;color:#f2f2f2;font-family:'DejaVu Sans Condensed','DejaVu Sans',sans-serif;font-stretch:condensed;left:194.65px;transform:translateX(-50%);">D</span>
<div style="left:216.5px;top:279px;width:1px;height:26px;background:#4a4a4a;"></div>
<span id="t71" style="top:282.53px;font-size:20.3px;line-height:20.3px;color:#f2f2f2;font-family:'DejaVu Sans Condensed','DejaVu Sans',sans-serif;font-stretch:condensed;left:239.4px;transform:translateX(-50%);">E</span>
<div style="left:261.3px;top:279px;width:1px;height:26px;background:#4a4a4a;"></div>
<span id="t72" style="top:282.53px;font-size:20.3px;line-height:20.3px;color:#f2f2f2;font-family:'DejaVu Sans Condensed','DejaVu Sans',sans-serif;font-stretch:condensed;left:284.2px;transform:translateX(-50%);">F</span>
<div style="left:306.1px;top:279px;width:1px;height:26px;background:#4a4a4a;"></div>
<span id="t73" style="top:282.53px;font-size:20.3px;line-height:20.3px;color:#f2f2f2;font-family:'DejaVu Sans Condensed','DejaVu Sans',sans-serif;font-stretch:condensed;left:329.2px;transform:translateX(-50%);">G</span>
<div style="left:351.3px;top:279px;width:1px;height:26px;background:#4a4a4a;"></div>
<span id="t74" style="top:282.53px;font-size:20.3px;line-height:20.3px;color:#f2f2f2;font-family:'DejaVu Sans Condensed','DejaVu Sans',sans-serif;font-stretch:condensed;left:374.65px;transform:translateX(-50%);">H</span>
<div style="left:397px;top:279px;width:1px;height:26px;background:#4a4a4a;"></div>
<span id="t75" style="top:282.53px;font-size:20.3px;line-height:20.3px;color:#f2f2f2;font-family:'DejaVu Sans Condensed','DejaVu Sans',sans-serif;font-stretch:condensed;left:500.25px;transform:translateX(-50%);">I</span>
<div style="left:602.5px;top:279px;width:1px;height:26px;background:#4a4a4a;"></div>
<span id="t76" style="top:282.53px;font-size:20.3px;line-height:20.3px;color:#f2f2f2;font-family:'DejaVu Sans Condensed','DejaVu Sans',sans-serif;font-stretch:condensed;left:706px;transform:translateX(-50%);">J</span>
<div style="left:808.5px;top:279px;width:1px;height:26px;background:#4a4a4a;"></div>
<span id="t77" style="top:282.53px;font-size:20.3px;line-height:20.3px;color:#f2f2f2;font-family:'DejaVu Sans Condensed','DejaVu Sans',sans-serif;font-stretch:condensed;left:912px;transform:translateX(-50%);">K</span>
<div style="left:1014.5px;top:279px;width:1px;height:26px;background:#4a4a4a;"></div>
<span id="t78" style="top:282.53px;font-size:20.3px;line-height:20.3px;color:#f2f2f2;font-family:'DejaVu Sans Condensed','DejaVu Sans',sans-serif;font-stretch:condensed;left:1118px;transform:translateX(-50%);">L</span>
<div style="left:1220.5px;top:279px;width:1px;height:26px;background:#4a4a4a;"></div>
<span id="t79" style="top:282.53px;font-size:20.3px;line-height:20.3px;color:#f2f2f2;font-family:'DejaVu Sans Condensed','DejaVu Sans',sans-serif;font-stretch:condensed;left:1324px;transform:translateX(-50%);">M</span>
<div style="left:1426.5px;top:279px;width:1px;height:26px;background:#4a4a4a;"></div>
<span id="t80" style="top:282.53px;font-size:20.3px;line-height:20.3px;color:#f2f2f2;font-family:'DejaVu Sans Condensed','DejaVu Sans',sans-serif;font-stretch:condensed;left:1530px;transform:translateX(-50%);">N</span>
<div style="left:1632.5px;top:279px;width:1px;height:26px;background:#4a4a4a;"></div>
<span id="t81" style="top:282.53px;font-size:20.3px;line-height:20.3px;color:#f2f2f2;font-family:'DejaVu Sans Condensed','DejaVu Sans',sans-serif;font-stretch:condensed;left:1736px;transform:translateX(-50%);">O</span>
<div style="left:1838.5px;top:279px;width:1px;height:26px;background:#4a4a4a;"></div>
<span id="t82" style="top:282.53px;font-size:20.3px;line-height:20.3px;color:#f2f2f2;font-family:'DejaVu Sans Condensed','DejaVu Sans',sans-serif;font-stretch:condensed;left:1866.5px;transform:translateX(-50%);">P</span>
<div style="left:1893.5px;top:279px;width:1px;height:26px;background:#4a4a4a;"></div>
<span id="t83" style="top:282.53px;font-size:20.3px;line-height:20.3px;color:#f2f2f2;font-family:'DejaVu Sans Condensed','DejaVu Sans',sans-serif;font-stretch:condensed;left:1975px;transform:translateX(-50%);">Q</span>
<div style="left:2055.5px;top:279px;width:1px;height:26px;background:#4a4a4a;"></div>
<span id="t84" style="top:282.53px;font-size:20.3px;line-height:20.3px;color:#f2f2f2;font-family:'DejaVu Sans Condensed','DejaVu Sans',sans-serif;font-stretch:condensed;left:2137px;transform:translateX(-50%);">R</span>
<div style="left:2217.5px;top:279px;width:1px;height:26px;background:#4a4a4a;"></div>
<span id="t85" style="top:282.53px;font-size:20.3px;line-height:20.3px;color:#f2f2f2;font-family:'DejaVu Sans Condensed','DejaVu Sans',sans-serif;font-stretch:condensed;left:2299px;transform:translateX(-50%);">S</span>
<div style="left:2379.5px;top:279px;width:1px;height:26px;background:#4a4a4a;"></div>
<span id="t86" style="top:282.53px;font-size:20.3px;line-height:20.3px;color:#f2f2f2;font-family:'DejaVu Sans Condensed','DejaVu Sans',sans-serif;font-stretch:condensed;left:2461px;transform:translateX(-50%);">T</span>
<div style="left:2541.5px;top:279px;width:1px;height:26px;background:#4a4a4a;"></div>
<span id="t87" style="top:282.53px;font-size:20.3px;line-height:20.3px;color:#f2f2f2;font-family:'DejaVu Sans Condensed','DejaVu Sans',sans-serif;font-stretch:condensed;left:2623px;transform:translateX(-50%);">U</span>
<div style="left:2703.5px;top:279px;width:1px;height:26px;background:#4a4a4a;"></div>
<span id="t88" style="top:282.53px;font-size:20.3px;line-height:20.3px;color:#f2f2f2;font-family:'DejaVu Sans Condensed','DejaVu Sans',sans-serif;font-stretch:condensed;left:2775.5px;transform:translateX(-50%);">V</span>
<div style="left:2846.5px;top:279px;width:1px;height:26px;background:#4a4a4a;"></div>
<span id="t89" style="top:282.53px;font-size:20.3px;line-height:20.3px;color:#f2f2f2;font-family:'DejaVu Sans Condensed','DejaVu Sans',sans-serif;font-stretch:condensed;left:2848.5px;clip-path:inset(0 10px 0 0);">W</span>
<svg style="left:11px;top:278px;" width="42" height="27" viewBox="0 0 42 27"><path d="M39 4 L39 24.5 L18 24.5 Z" fill="#6e6e6e"/></svg>
<div style="left:11px;top:305px;width:42px;height:1364.6px;background:#0a0a0a;"></div>
<div style="left:11px;top:305.2px;width:42px;height:43.6px;background:#6e6e6e;"></div>
<div style="left:52px;top:305.2px;width:2px;height:43.6px;background:#1f7a48;"></div>
<span id="t90" style="top:326.56px;font-size:20.5px;line-height:20.5px;color:#f2f2f2;font-family:'DejaVu Sans Condensed','DejaVu Sans',sans-serif;font-stretch:condensed;left:32px;transform:translateX(-50%);">1</span>
<div style="left:11px;top:348.3px;width:42px;height:1px;background:#4a4a4a;"></div>
<span id="t91" style="top:367.26px;font-size:20.5px;line-height:20.5px;color:#f2f2f2;font-family:'DejaVu Sans Condensed','DejaVu Sans',sans-serif;font-stretch:condensed;left:32px;transform:translateX(-50%);">2</span>
<div style="left:11px;top:389px;width:42px;height:1px;background:#4a4a4a;"></div>
<span id="t92" style="top:407.96px;font-size:20.5px;line-height:20.5px;color:#f2f2f2;font-family:'DejaVu Sans Condensed','DejaVu Sans',sans-serif;font-stretch:condensed;left:32px;transform:translateX(-50%);">3</span>
<div style="left:11px;top:429.7px;width:42px;height:1px;background:#4a4a4a;"></div>
<span id="t93" style="top:436.76px;font-size:20.5px;line-height:20.5px;color:#f2f2f2;font-family:'DejaVu Sans Condensed','DejaVu Sans',sans-serif;font-stretch:condensed;left:32px;transform:translateX(-50%);">4</span>
<div style="left:11px;top:458.5px;width:42px;height:1px;background:#4a4a4a;"></div>
<span id="t94" style="top:479.36px;font-size:20.5px;line-height:20.5px;color:#f2f2f2;font-family:'DejaVu Sans Condensed','DejaVu Sans',sans-serif;font-stretch:condensed;left:32px;transform:translateX(-50%);">5</span>
<div style="left:11px;top:501.1px;width:42px;height:1px;background:#4a4a4a;"></div>
<span id="t95" style="top:514.36px;font-size:20.5px;line-height:20.5px;color:#f2f2f2;font-family:'DejaVu Sans Condensed','DejaVu Sans',sans-serif;font-stretch:condensed;left:32px;transform:translateX(-50%);">6</span>
<div style="left:11px;top:536.1px;width:42px;height:1px;background:#4a4a4a;"></div>
<span id="t96" style="top:543.36px;font-size:20.5px;line-height:20.5px;color:#f2f2f2;font-family:'DejaVu Sans Condensed','DejaVu Sans',sans-serif;font-stretch:condensed;left:32px;transform:translateX(-50%);">7</span>
<div style="left:11px;top:565.1px;width:42px;height:1px;background:#4a4a4a;"></div>
<div style="left:11px;top:570.9px;width:42px;height:1px;background:#4a4a4a;"></div>
<span id="t97" style="top:578.36px;font-size:20.5px;line-height:20.5px;color:#f2f2f2;font-family:'DejaVu Sans Condensed','DejaVu Sans',sans-serif;font-stretch:condensed;left:32px;transform:translateX(-50%);">9</span>
<div style="left:11px;top:600.1px;width:42px;height:1px;background:#4a4a4a;"></div>
<span id="t98" style="top:607.26px;font-size:20.5px;line-height:20.5px;color:#f2f2f2;font-family:'DejaVu Sans Condensed','DejaVu Sans',sans-serif;font-stretch:condensed;left:32px;transform:translateX(-50%);">10</span>
<div style="left:11px;top:629px;width:42px;height:1px;background:#4a4a4a;"></div>
<span id="t99" style="top:636.16px;font-size:20.5px;line-height:20.5px;color:#f2f2f2;font-family:'DejaVu Sans Condensed','DejaVu Sans',sans-serif;font-stretch:condensed;left:32px;transform:translateX(-50%);">11</span>
<div style="left:11px;top:657.9px;width:42px;height:1px;background:#4a4a4a;"></div>
<span id="t100" style="top:665.06px;font-size:20.5px;line-height:20.5px;color:#f2f2f2;font-family:'DejaVu Sans Condensed','DejaVu Sans',sans-serif;font-stretch:condensed;left:32px;transform:translateX(-50%);">12</span>
<div style="left:11px;top:686.8px;width:42px;height:1px;background:#4a4a4a;"></div>
<span id="t101" style="top:693.96px;font-size:20.5px;line-height:20.5px;color:#f2f2f2;font-family:'DejaVu Sans Condensed','DejaVu Sans',sans-serif;font-stretch:condensed;left:32px;transform:translateX(-50%);">13</span>
<div style="left:11px;top:715.7px;width:42px;height:1px;background:#4a4a4a;"></div>
<span id="t102" style="top:722.86px;font-size:20.5px;line-height:20.5px;color:#f2f2f2;font-family:'DejaVu Sans Condensed','DejaVu Sans',sans-serif;font-stretch:condensed;left:32px;transform:translateX(-50%);">14</span>
<div style="left:11px;top:744.6px;width:42px;height:1px;background:#4a4a4a;"></div>
<span id="t103" style="top:745.26px;font-size:20.5px;line-height:20.5px;color:#f2f2f2;font-family:'DejaVu Sans Condensed','DejaVu Sans',sans-serif;font-stretch:condensed;left:32px;transform:translateX(-50%);">15</span>
<div style="left:11px;top:767px;width:42px;height:1px;background:#4a4a4a;"></div>
<span id="t104" style="top:787.06px;font-size:20.5px;line-height:20.5px;color:#f2f2f2;font-family:'DejaVu Sans Condensed','DejaVu Sans',sans-serif;font-stretch:condensed;left:32px;transform:translateX(-50%);">16</span>
<div style="left:11px;top:808.8px;width:42px;height:1px;background:#4a4a4a;"></div>
<span id="t105" style="top:816.06px;font-size:20.5px;line-height:20.5px;color:#f2f2f2;font-family:'DejaVu Sans Condensed','DejaVu Sans',sans-serif;font-stretch:condensed;left:32px;transform:translateX(-50%);">17</span>
<div style="left:11px;top:837.8px;width:42px;height:1px;background:#4a4a4a;"></div>
<span id="t106" style="top:845.06px;font-size:20.5px;line-height:20.5px;color:#f2f2f2;font-family:'DejaVu Sans Condensed','DejaVu Sans',sans-serif;font-stretch:condensed;left:32px;transform:translateX(-50%);">18</span>
<div style="left:11px;top:866.8px;width:42px;height:1px;background:#4a4a4a;"></div>
<span id="t107" style="top:874.06px;font-size:20.5px;line-height:20.5px;color:#f2f2f2;font-family:'DejaVu Sans Condensed','DejaVu Sans',sans-serif;font-stretch:condensed;left:32px;transform:translateX(-50%);">19</span>
<div style="left:11px;top:895.8px;width:42px;height:1px;background:#4a4a4a;"></div>
<span id="t108" style="top:903.06px;font-size:20.5px;line-height:20.5px;color:#f2f2f2;font-family:'DejaVu Sans Condensed','DejaVu Sans',sans-serif;font-stretch:condensed;left:32px;transform:translateX(-50%);">20</span>
<div style="left:11px;top:924.8px;width:42px;height:1px;background:#4a4a4a;"></div>
<span id="t109" style="top:932.06px;font-size:20.5px;line-height:20.5px;color:#f2f2f2;font-family:'DejaVu Sans Condensed','DejaVu Sans',sans-serif;font-stretch:condensed;left:32px;transform:translateX(-50%);">21</span>
<div style="left:11px;top:953.8px;width:42px;height:1px;background:#4a4a4a;"></div>
<span id="t110" style="top:961.06px;font-size:20.5px;line-height:20.5px;color:#f2f2f2;font-family:'DejaVu Sans Condensed','DejaVu Sans',sans-serif;font-stretch:condensed;left:32px;transform:translateX(-50%);">22</span>
<div style="left:11px;top:982.8px;width:42px;height:1px;background:#4a4a4a;"></div>
<span id="t111" style="top:990.06px;font-size:20.5px;line-height:20.5px;color:#f2f2f2;font-family:'DejaVu Sans Condensed','DejaVu Sans',sans-serif;font-stretch:condensed;left:32px;transform:translateX(-50%);">23</span>
<div style="left:11px;top:1011.8px;width:42px;height:1px;background:#4a4a4a;"></div>
<span id="t112" style="top:1019.06px;font-size:20.5px;line-height:20.5px;color:#f2f2f2;font-family:'DejaVu Sans Condensed','DejaVu Sans',sans-serif;font-stretch:condensed;left:32px;transform:translateX(-50%);">24</span>
<div style="left:11px;top:1040.8px;width:42px;height:1px;background:#4a4a4a;"></div>
<span id="t113" style="top:1048.06px;font-size:20.5px;line-height:20.5px;color:#f2f2f2;font-family:'DejaVu Sans Condensed','DejaVu Sans',sans-serif;font-stretch:condensed;left:32px;transform:translateX(-50%);">25</span>
<div style="left:11px;top:1069.8px;width:42px;height:1px;background:#4a4a4a;"></div>
<span id="t114" style="top:1077.06px;font-size:20.5px;line-height:20.5px;color:#f2f2f2;font-family:'DejaVu Sans Condensed','DejaVu Sans',sans-serif;font-stretch:condensed;left:32px;transform:translateX(-50%);">26</span>
<div style="left:11px;top:1098.8px;width:42px;height:1px;background:#4a4a4a;"></div>
<span id="t115" style="top:1106.06px;font-size:20.5px;line-height:20.5px;color:#f2f2f2;font-family:'DejaVu Sans Condensed','DejaVu Sans',sans-serif;font-stretch:condensed;left:32px;transform:translateX(-50%);">27</span>
<div style="left:11px;top:1127.8px;width:42px;height:1px;background:#4a4a4a;"></div>
<span id="t116" style="top:1135.06px;font-size:20.5px;line-height:20.5px;color:#f2f2f2;font-family:'DejaVu Sans Condensed','DejaVu Sans',sans-serif;font-stretch:condensed;left:32px;transform:translateX(-50%);">28</span>
<div style="left:11px;top:1156.8px;width:42px;height:1px;background:#4a4a4a;"></div>
<span id="t117" style="top:1164.06px;font-size:20.5px;line-height:20.5px;color:#f2f2f2;font-family:'DejaVu Sans Condensed','DejaVu Sans',sans-serif;font-stretch:condensed;left:32px;transform:translateX(-50%);">29</span>
<div style="left:11px;top:1185.8px;width:42px;height:1px;background:#4a4a4a;"></div>
<span id="t118" style="top:1193.06px;font-size:20.5px;line-height:20.5px;color:#f2f2f2;font-family:'DejaVu Sans Condensed','DejaVu Sans',sans-serif;font-stretch:condensed;left:32px;transform:translateX(-50%);">30</span>
<div style="left:11px;top:1214.8px;width:42px;height:1px;background:#4a4a4a;"></div>
<span id="t119" style="top:1222.06px;font-size:20.5px;line-height:20.5px;color:#f2f2f2;font-family:'DejaVu Sans Condensed','DejaVu Sans',sans-serif;font-stretch:condensed;left:32px;transform:translateX(-50%);">31</span>
<div style="left:11px;top:1243.8px;width:42px;height:1px;background:#4a4a4a;"></div>
<span id="t120" style="top:1251.06px;font-size:20.5px;line-height:20.5px;color:#f2f2f2;font-family:'DejaVu Sans Condensed','DejaVu Sans',sans-serif;font-stretch:condensed;left:32px;transform:translateX(-50%);">32</span>
<div style="left:11px;top:1272.8px;width:42px;height:1px;background:#4a4a4a;"></div>
<span id="t121" style="top:1280.06px;font-size:20.5px;line-height:20.5px;color:#f2f2f2;font-family:'DejaVu Sans Condensed','DejaVu Sans',sans-serif;font-stretch:condensed;left:32px;transform:translateX(-50%);">33</span>
<div style="left:11px;top:1301.8px;width:42px;height:1px;background:#4a4a4a;"></div>
<span id="t122" style="top:1309.06px;font-size:20.5px;line-height:20.5px;color:#f2f2f2;font-family:'DejaVu Sans Condensed','DejaVu Sans',sans-serif;font-stretch:condensed;left:32px;transform:translateX(-50%);">34</span>
<div style="left:11px;top:1330.8px;width:42px;height:1px;background:#4a4a4a;"></div>
<span id="t123" style="top:1338.06px;font-size:20.5px;line-height:20.5px;color:#f2f2f2;font-family:'DejaVu Sans Condensed','DejaVu Sans',sans-serif;font-stretch:condensed;left:32px;transform:translateX(-50%);">35</span>
<div style="left:11px;top:1359.8px;width:42px;height:1px;background:#4a4a4a;"></div>
<span id="t124" style="top:1367.06px;font-size:20.5px;line-height:20.5px;color:#f2f2f2;font-family:'DejaVu Sans Condensed','DejaVu Sans',sans-serif;font-stretch:condensed;left:32px;transform:translateX(-50%);">36</span>
<div style="left:11px;top:1388.8px;width:42px;height:1px;background:#4a4a4a;"></div>
<span id="t125" style="top:1396.06px;font-size:20.5px;line-height:20.5px;color:#f2f2f2;font-family:'DejaVu Sans Condensed','DejaVu Sans',sans-serif;font-stretch:condensed;left:32px;transform:translateX(-50%);">37</span>
<div style="left:11px;top:1417.8px;width:42px;height:1px;background:#4a4a4a;"></div>
<span id="t126" style="top:1425.06px;font-size:20.5px;line-height:20.5px;color:#f2f2f2;font-family:'DejaVu Sans Condensed','DejaVu Sans',sans-serif;font-stretch:condensed;left:32px;transform:translateX(-50%);">38</span>
<div style="left:11px;top:1446.8px;width:42px;height:1px;background:#4a4a4a;"></div>
<span id="t127" style="top:1454.06px;font-size:20.5px;line-height:20.5px;color:#f2f2f2;font-family:'DejaVu Sans Condensed','DejaVu Sans',sans-serif;font-stretch:condensed;left:32px;transform:translateX(-50%);">39</span>
<div style="left:11px;top:1475.8px;width:42px;height:1px;background:#4a4a4a;"></div>
<span id="t128" style="top:1483.06px;font-size:20.5px;line-height:20.5px;color:#f2f2f2;font-family:'DejaVu Sans Condensed','DejaVu Sans',sans-serif;font-stretch:condensed;left:32px;transform:translateX(-50%);">40</span>
<div style="left:11px;top:1504.8px;width:42px;height:1px;background:#4a4a4a;"></div>
<span id="t129" style="top:1512.06px;font-size:20.5px;line-height:20.5px;color:#f2f2f2;font-family:'DejaVu Sans Condensed','DejaVu Sans',sans-serif;font-stretch:condensed;left:32px;transform:translateX(-50%);">41</span>
<div style="left:11px;top:1533.8px;width:42px;height:1px;background:#4a4a4a;"></div>
<span id="t130" style="top:1554.76px;font-size:20.5px;line-height:20.5px;color:#f2f2f2;font-family:'DejaVu Sans Condensed','DejaVu Sans',sans-serif;font-stretch:condensed;left:32px;transform:translateX(-50%);">42</span>
<div style="left:11px;top:1576.5px;width:42px;height:1px;background:#4a4a4a;"></div>
<span id="t131" style="top:1583.76px;font-size:20.5px;line-height:20.5px;color:#f2f2f2;font-family:'DejaVu Sans Condensed','DejaVu Sans',sans-serif;font-stretch:condensed;left:32px;transform:translateX(-50%);">43</span>
<div style="left:11px;top:1605.5px;width:42px;height:1px;background:#4a4a4a;"></div>
<span id="t132" style="top:1613.16px;font-size:20.5px;line-height:20.5px;color:#f2f2f2;font-family:'DejaVu Sans Condensed','DejaVu Sans',sans-serif;font-stretch:condensed;left:32px;transform:translateX(-50%);">44</span>
<div style="left:11px;top:1634.9px;width:42px;height:1px;background:#4a4a4a;"></div>
<span id="t133" style="top:1642.36px;font-size:20.5px;line-height:20.5px;color:#f2f2f2;font-family:'DejaVu Sans Condensed','DejaVu Sans',sans-serif;font-stretch:condensed;left:32px;transform:translateX(-50%);">45</span>
<div style="left:11px;top:1664.1px;width:42px;height:1px;background:#4a4a4a;"></div>
<div style="left:11px;top:1669.6px;width:42px;height:2px;background:#0a0a0a;"></div>
<span id="t134" style="top:309.64px;font-size:37.3px;line-height:37.3px;color:#262626;font-family:'DejaVu Sans Condensed','DejaVu Sans',sans-serif;font-stretch:condensed;font-weight:bold;-webkit-text-stroke:0.63px;left:89px;transform:scaleX(1.0604);transform-origin:0 50%;">Top Revenue</span>
<span id="t135" style="top:354.3px;font-size:31.8px;line-height:31.8px;color:#000;font-family:'DejaVu Sans Condensed','DejaVu Sans',sans-serif;font-stretch:condensed;font-weight:bold;-webkit-text-stroke:0.54px;left:89px;transform:scaleX(1.072);transform-origin:0 50%;">ABC Company Inc.</span>
<span id="t136" style="top:400.07px;font-size:20.6px;line-height:20.6px;color:#1f6fec;font-family:'DejaVu Sans Condensed','DejaVu Sans',sans-serif;font-stretch:condensed;font-weight:bold;-webkit-text-stroke:0.35px;left:87.5px;transform:scaleX(1.054);transform-origin:0 50%;">Go to Table of Contents</span>
<div style="left:87.5px;top:420px;width:257.5px;height:2px;background:#1f6fec;"></div>
<div style="left:53px;top:458.5px;width:2807px;height:1px;background:#b5b5b5;"></div>
<div style="left:83px;top:460px;width:2764px;height:41.7px;background:#4b4fd1;"></div>
<div style="left:603px;top:500.7px;width:1030px;height:1px;background:#fff;"></div>
<span id="t137" style="top:464.57px;font-size:33.6px;line-height:33.6px;color:#fff;font-family:'DejaVu Sans Condensed','DejaVu Sans',sans-serif;font-stretch:condensed;font-weight:bold;-webkit-text-stroke:0.57px;left:1465px;transform:translateX(-50%) scaleX(1.0145);transform-origin:50% 50%;">Top 5 Revenue Streams ($&#x27;000) - 5 years to December 2030</span>
<div style="left:83px;top:537.3px;width:520px;height:27.9px;background:#6d72e8;"></div>
<span id="t138" style="top:541.3px;font-size:21.4px;line-height:21.4px;color:#fff;font-family:'DejaVu Sans Condensed','DejaVu Sans',sans-serif;font-stretch:condensed;font-weight:bold;-webkit-text-stroke:0.36px;left:97.4px;transform:scaleX(1.0356);transform-origin:0 50%;">Year Ending</span>
<div style="left:604px;top:537.3px;width:205px;height:27.9px;background:#6d72e8;"></div>
<span id="t139" style="top:541.3px;font-size:21.4px;line-height:21.4px;color:#fff;font-family:'DejaVu Sans Condensed','DejaVu Sans',sans-serif;font-stretch:condensed;font-weight:bold;-webkit-text-stroke:0.36px;left:706.5px;transform:translateX(-50%) scaleX(1.0194);transform-origin:50% 50%;">2026</span>
<div style="left:810px;top:537.3px;width:205px;height:27.9px;background:#6d72e8;"></div>
<span id="t140" style="top:541.3px;font-size:21.4px;line-height:21.4px;color:#fff;font-family:'DejaVu Sans Condensed','DejaVu Sans',sans-serif;font-stretch:condensed;font-weight:bold;-webkit-text-stroke:0.36px;left:912.5px;transform:translateX(-50%) scaleX(1.0194);transform-origin:50% 50%;">2027</span>
<div style="left:1016px;top:537.3px;width:205px;height:27.9px;background:#6d72e8;"></div>
<span id="t141" style="top:541.3px;font-size:21.4px;line-height:21.4px;color:#fff;font-family:'DejaVu Sans Condensed','DejaVu Sans',sans-serif;font-stretch:condensed;font-weight:bold;-webkit-text-stroke:0.36px;left:1118.5px;transform:translateX(-50%) scaleX(1.0194);transform-origin:50% 50%;">2028</span>
<div style="left:1222px;top:537.3px;width:205px;height:27.9px;background:#6d72e8;"></div>
<span id="t142" style="top:541.3px;font-size:21.4px;line-height:21.4px;color:#fff;font-family:'DejaVu Sans Condensed','DejaVu Sans',sans-serif;font-stretch:condensed;font-weight:bold;-webkit-text-stroke:0.36px;left:1324.5px;transform:translateX(-50%) scaleX(1.0194);transform-origin:50% 50%;">2029</span>
<div style="left:1428px;top:537.3px;width:205px;height:27.9px;background:#6d72e8;"></div>
<span id="t143" style="top:541.3px;font-size:21.4px;line-height:21.4px;color:#fff;font-family:'DejaVu Sans Condensed','DejaVu Sans',sans-serif;font-stretch:condensed;font-weight:bold;-webkit-text-stroke:0.36px;left:1530.5px;transform:translateX(-50%) scaleX(1.0194);transform-origin:50% 50%;">2030</span>
<div style="left:1894px;top:537.3px;width:162px;height:27.9px;background:#6d72e8;"></div>
<span id="t144" style="top:541.3px;font-size:21.4px;line-height:21.4px;color:#fff;font-family:'DejaVu Sans Condensed','DejaVu Sans',sans-serif;font-stretch:condensed;font-weight:bold;-webkit-text-stroke:0.36px;left:1975.5px;transform:translateX(-50%) scaleX(1.0194);transform-origin:50% 50%;">2026</span>
<div style="left:2057px;top:537.3px;width:161px;height:27.9px;background:#6d72e8;"></div>
<span id="t145" style="top:541.3px;font-size:21.4px;line-height:21.4px;color:#fff;font-family:'DejaVu Sans Condensed','DejaVu Sans',sans-serif;font-stretch:condensed;font-weight:bold;-webkit-text-stroke:0.36px;left:2137.5px;transform:translateX(-50%) scaleX(1.0194);transform-origin:50% 50%;">2027</span>
<div style="left:2219px;top:537.3px;width:161px;height:27.9px;background:#6d72e8;"></div>
<span id="t146" style="top:541.3px;font-size:21.4px;line-height:21.4px;color:#fff;font-family:'DejaVu Sans Condensed','DejaVu Sans',sans-serif;font-stretch:condensed;font-weight:bold;-webkit-text-stroke:0.36px;left:2299.5px;transform:translateX(-50%) scaleX(1.0194);transform-origin:50% 50%;">2028</span>
<div style="left:2381px;top:537.3px;width:161px;height:27.9px;background:#6d72e8;"></div>
<span id="t147" style="top:541.3px;font-size:21.4px;line-height:21.4px;color:#fff;font-family:'DejaVu Sans Condensed','DejaVu Sans',sans-serif;font-stretch:condensed;font-weight:bold;-webkit-text-stroke:0.36px;left:2461.5px;transform:translateX(-50%) scaleX(1.0194);transform-origin:50% 50%;">2029</span>
<div style="left:2543px;top:537.3px;width:161px;height:27.9px;background:#6d72e8;"></div>
<span id="t148" style="top:541.3px;font-size:21.4px;line-height:21.4px;color:#fff;font-family:'DejaVu Sans Condensed','DejaVu Sans',sans-serif;font-stretch:condensed;font-weight:bold;-webkit-text-stroke:0.36px;left:2623.5px;transform:translateX(-50%) scaleX(1.0194);transform-origin:50% 50%;">2030</span>
<span id="t149" style="top:576.18px;font-size:21.3px;line-height:21.3px;color:#000;font-family:'DejaVu Sans Condensed','DejaVu Sans',sans-serif;font-stretch:condensed;left:86px;transform:scaleX(1.0329);transform-origin:0 50%;">Ads / Promotion Fees</span>
<span id="t150" style="top:576.18px;font-size:21.3px;line-height:21.3px;color:#000;font-family:'DejaVu Sans Condensed','DejaVu Sans',sans-serif;font-stretch:condensed;right:2105px;transform:scaleX(0.9518);transform-origin:100% 50%;">108</span>
<span id="t151" style="top:576.18px;font-size:21.3px;line-height:21.3px;color:#000;font-family:'DejaVu Sans Condensed','DejaVu Sans',sans-serif;font-stretch:condensed;right:1899px;transform:scaleX(0.9518);transform-origin:100% 50%;">522</span>
<span id="t152" style="top:576.18px;font-size:21.3px;line-height:21.3px;color:#000;font-family:'DejaVu Sans Condensed','DejaVu Sans',sans-serif;font-stretch:condensed;right:1693px;transform:scaleX(0.9627);transform-origin:100% 50%;">1,624</span>
<span id="t153" style="top:576.18px;font-size:21.3px;line-height:21.3px;color:#000;font-family:'DejaVu Sans Condensed','DejaVu Sans',sans-serif;font-stretch:condensed;right:1487px;transform:scaleX(0.9627);transform-origin:100% 50%;">3,778</span>
<span id="t154" style="top:576.18px;font-size:21.3px;line-height:21.3px;color:#000;font-family:'DejaVu Sans Condensed','DejaVu Sans',sans-serif;font-stretch:condensed;right:1281px;transform:scaleX(0.9627);transform-origin:100% 50%;">7,445</span>
<span id="t155" style="top:576.18px;font-size:21.3px;line-height:21.3px;color:#000;font-family:'DejaVu Sans',sans-serif;font-style:italic;right:860px;transform:scaleX(1.0173);transform-origin:100% 50%;">%</span>
<span id="t156" style="top:576.18px;font-size:21.3px;line-height:21.3px;color:#000;font-family:'DejaVu Sans Condensed','DejaVu Sans',sans-serif;font-stretch:condensed;font-style:italic;right:881.2px;transform:scaleX(0.9705);transform-origin:100% 50%;">35.2</span>
<span id="t157" style="top:576.18px;font-size:21.3px;line-height:21.3px;color:#000;font-family:'DejaVu Sans',sans-serif;font-style:italic;right:698px;transform:scaleX(1.0173);transform-origin:100% 50%;">%</span>
<span id="t158" style="top:576.18px;font-size:21.3px;line-height:21.3px;color:#000;font-family:'DejaVu Sans Condensed','DejaVu Sans',sans-serif;font-stretch:condensed;font-style:italic;right:719.2px;transform:scaleX(0.9705);transform-origin:100% 50%;">38.1</span>
<span id="t159" style="top:576.18px;font-size:21.3px;line-height:21.3px;color:#000;font-family:'DejaVu Sans',sans-serif;font-style:italic;right:536px;transform:scaleX(1.0173);transform-origin:100% 50%;">%</span>
<span id="t160" style="top:576.18px;font-size:21.3px;line-height:21.3px;color:#000;font-family:'DejaVu Sans Condensed','DejaVu Sans',sans-serif;font-stretch:condensed;font-style:italic;right:557.2px;transform:scaleX(0.9705);transform-origin:100% 50%;">38.1</span>
<span id="t161" style="top:576.18px;font-size:21.3px;line-height:21.3px;color:#000;font-family:'DejaVu Sans',sans-serif;font-style:italic;right:374px;transform:scaleX(1.0173);transform-origin:100% 50%;">%</span>
<span id="t162" style="top:576.18px;font-size:21.3px;line-height:21.3px;color:#000;font-family:'DejaVu Sans Condensed','DejaVu Sans',sans-serif;font-stretch:condensed;font-style:italic;right:395.2px;transform:scaleX(0.9705);transform-origin:100% 50%;">40.9</span>
<span id="t163" style="top:576.18px;font-size:21.3px;line-height:21.3px;color:#000;font-family:'DejaVu Sans',sans-serif;font-style:italic;right:212px;transform:scaleX(1.0173);transform-origin:100% 50%;">%</span>
<span id="t164" style="top:576.18px;font-size:21.3px;line-height:21.3px;color:#000;font-family:'DejaVu Sans Condensed','DejaVu Sans',sans-serif;font-stretch:condensed;font-style:italic;right:233.2px;transform:scaleX(0.9705);transform-origin:100% 50%;">43.0</span>
<span id="t165" style="top:605.08px;font-size:21.3px;line-height:21.3px;color:#000;font-family:'DejaVu Sans Condensed','DejaVu Sans',sans-serif;font-stretch:condensed;left:86px;transform:scaleX(1.0055);transform-origin:0 50%;">Commission Revenue</span>
<span id="t166" style="top:605.08px;font-size:21.3px;line-height:21.3px;color:#000;font-family:'DejaVu Sans Condensed','DejaVu Sans',sans-serif;font-stretch:condensed;right:2105px;transform:scaleX(0.9518);transform-origin:100% 50%;">137</span>
<span id="t167" style="top:605.08px;font-size:21.3px;line-height:21.3px;color:#000;font-family:'DejaVu Sans Condensed','DejaVu Sans',sans-serif;font-stretch:condensed;right:1899px;transform:scaleX(0.9518);transform-origin:100% 50%;">578</span>
<span id="t168" style="top:605.08px;font-size:21.3px;line-height:21.3px;color:#000;font-family:'DejaVu Sans Condensed','DejaVu Sans',sans-serif;font-stretch:condensed;right:1693px;transform:scaleX(0.9627);transform-origin:100% 50%;">1,590</span>
<span id="t169" style="top:605.08px;font-size:21.3px;line-height:21.3px;color:#000;font-family:'DejaVu Sans Condensed','DejaVu Sans',sans-serif;font-stretch:condensed;right:1487px;transform:scaleX(0.9627);transform-origin:100% 50%;">3,318</span>
<span id="t170" style="top:605.08px;font-size:21.3px;line-height:21.3px;color:#000;font-family:'DejaVu Sans Condensed','DejaVu Sans',sans-serif;font-stretch:condensed;right:1281px;transform:scaleX(0.9627);transform-origin:100% 50%;">5,720</span>
<span id="t171" style="top:605.08px;font-size:21.3px;line-height:21.3px;color:#000;font-family:'DejaVu Sans',sans-serif;font-style:italic;right:860px;transform:scaleX(1.0173);transform-origin:100% 50%;">%</span>
<span id="t172" style="top:605.08px;font-size:21.3px;line-height:21.3px;color:#000;font-family:'DejaVu Sans Condensed','DejaVu Sans',sans-serif;font-stretch:condensed;font-style:italic;right:881.2px;transform:scaleX(0.9705);transform-origin:100% 50%;">44.6</span>
<span id="t173" style="top:605.08px;font-size:21.3px;line-height:21.3px;color:#000;font-family:'DejaVu Sans',sans-serif;font-style:italic;right:698px;transform:scaleX(1.0173);transform-origin:100% 50%;">%</span>
<span id="t174" style="top:605.08px;font-size:21.3px;line-height:21.3px;color:#000;font-family:'DejaVu Sans Condensed','DejaVu Sans',sans-serif;font-stretch:condensed;font-style:italic;right:719.2px;transform:scaleX(0.9705);transform-origin:100% 50%;">42.2</span>
<span id="t175" style="top:605.08px;font-size:21.3px;line-height:21.3px;color:#000;font-family:'DejaVu Sans',sans-serif;font-style:italic;right:536px;transform:scaleX(1.0173);transform-origin:100% 50%;">%</span>
<span id="t176" style="top:605.08px;font-size:21.3px;line-height:21.3px;color:#000;font-family:'DejaVu Sans Condensed','DejaVu Sans',sans-serif;font-stretch:condensed;font-style:italic;right:557.2px;transform:scaleX(0.9705);transform-origin:100% 50%;">37.3</span>
<span id="t177" style="top:605.08px;font-size:21.3px;line-height:21.3px;color:#000;font-family:'DejaVu Sans',sans-serif;font-style:italic;right:374px;transform:scaleX(1.0173);transform-origin:100% 50%;">%</span>
<span id="t178" style="top:605.08px;font-size:21.3px;line-height:21.3px;color:#000;font-family:'DejaVu Sans Condensed','DejaVu Sans',sans-serif;font-stretch:condensed;font-style:italic;right:395.2px;transform:scaleX(0.9705);transform-origin:100% 50%;">35.9</span>
<span id="t179" style="top:605.08px;font-size:21.3px;line-height:21.3px;color:#000;font-family:'DejaVu Sans',sans-serif;font-style:italic;right:212px;transform:scaleX(1.0173);transform-origin:100% 50%;">%</span>
<span id="t180" style="top:605.08px;font-size:21.3px;line-height:21.3px;color:#000;font-family:'DejaVu Sans Condensed','DejaVu Sans',sans-serif;font-stretch:condensed;font-style:italic;right:233.2px;transform:scaleX(0.9705);transform-origin:100% 50%;">33.1</span>
<span id="t181" style="top:633.98px;font-size:21.3px;line-height:21.3px;color:#000;font-family:'DejaVu Sans Condensed','DejaVu Sans',sans-serif;font-stretch:condensed;left:86px;transform:scaleX(1.0071);transform-origin:0 50%;">Sellers Subscription - Brands</span>
<span id="t182" style="top:633.98px;font-size:21.3px;line-height:21.3px;color:#000;font-family:'DejaVu Sans Condensed','DejaVu Sans',sans-serif;font-stretch:condensed;right:2105px;transform:scaleX(0.9518);transform-origin:100% 50%;">17</span>
<span id="t183" style="top:633.98px;font-size:21.3px;line-height:21.3px;color:#000;font-family:'DejaVu Sans Condensed','DejaVu Sans',sans-serif;font-stretch:condensed;right:1899px;transform:scaleX(0.9518);transform-origin:100% 50%;">79</span>
<span id="t184" style="top:633.98px;font-size:21.3px;line-height:21.3px;color:#000;font-family:'DejaVu Sans Condensed','DejaVu Sans',sans-serif;font-stretch:condensed;right:1693px;transform:scaleX(0.9518);transform-origin:100% 50%;">239</span>
<span id="t185" style="top:633.98px;font-size:21.3px;line-height:21.3px;color:#000;font-family:'DejaVu Sans Condensed','DejaVu Sans',sans-serif;font-stretch:condensed;right:1487px;transform:scaleX(0.9518);transform-origin:100% 50%;">529</span>
<span id="t186" style="top:633.98px;font-size:21.3px;line-height:21.3px;color:#000;font-family:'DejaVu Sans Condensed','DejaVu Sans',sans-serif;font-stretch:condensed;right:1281px;transform:scaleX(0.9627);transform-origin:100% 50%;">1,051</span>
<span id="t187" style="top:633.98px;font-size:21.3px;line-height:21.3px;color:#000;font-family:'DejaVu Sans',sans-serif;font-style:italic;right:860px;transform:scaleX(1.0173);transform-origin:100% 50%;">%</span>
<span id="t188" style="top:633.98px;font-size:21.3px;line-height:21.3px;color:#000;font-family:'DejaVu Sans Condensed','DejaVu Sans',sans-serif;font-stretch:condensed;font-style:italic;right:881.2px;transform:scaleX(0.9781);transform-origin:100% 50%;">5.6</span>
<span id="t189" style="top:633.98px;font-size:21.3px;line-height:21.3px;color:#000;font-family:'DejaVu Sans',sans-serif;font-style:italic;right:698px;transform:scaleX(1.0173);transform-origin:100% 50%;">%</span>
<span id="t190" style="top:633.98px;font-size:21.3px;line-height:21.3px;color:#000;font-family:'DejaVu Sans Condensed','DejaVu Sans',sans-serif;font-stretch:condensed;font-style:italic;right:719.2px;transform:scaleX(0.9781);transform-origin:100% 50%;">5.8</span>
<span id="t191" style="top:633.98px;font-size:21.3px;line-height:21.3px;color:#000;font-family:'DejaVu Sans',sans-serif;font-style:italic;right:536px;transform:scaleX(1.0173);transform-origin:100% 50%;">%</span>
<span id="t192" style="top:633.98px;font-size:21.3px;line-height:21.3px;color:#000;font-family:'DejaVu Sans Condensed','DejaVu Sans',sans-serif;font-stretch:condensed;font-style:italic;right:557.2px;transform:scaleX(0.9781);transform-origin:100% 50%;">5.6</span>
<span id="t193" style="top:633.98px;font-size:21.3px;line-height:21.3px;color:#000;font-family:'DejaVu Sans',sans-serif;font-style:italic;right:374px;transform:scaleX(1.0173);transform-origin:100% 50%;">%</span>
<span id="t194" style="top:633.98px;font-size:21.3px;line-height:21.3px;color:#000;font-family:'DejaVu Sans Condensed','DejaVu Sans',sans-serif;font-stretch:condensed;font-style:italic;right:395.2px;transform:scaleX(0.9781);transform-origin:100% 50%;">5.7</span>
<span id="t195" style="top:633.98px;font-size:21.3px;line-height:21.3px;color:#000;font-family:'DejaVu Sans',sans-serif;font-style:italic;right:212px;transform:scaleX(1.0173);transform-origin:100% 50%;">%</span>
<span id="t196" style="top:633.98px;font-size:21.3px;line-height:21.3px;color:#000;font-family:'DejaVu Sans Condensed','DejaVu Sans',sans-serif;font-stretch:condensed;font-style:italic;right:233.2px;transform:scaleX(0.9781);transform-origin:100% 50%;">6.1</span>
<span id="t197" style="top:662.88px;font-size:21.3px;line-height:21.3px;color:#000;font-family:'DejaVu Sans Condensed','DejaVu Sans',sans-serif;font-stretch:condensed;left:86px;transform:scaleX(1.004);transform-origin:0 50%;">Sellers Subscription - Small Biz</span>
<span id="t198" style="top:662.88px;font-size:21.3px;line-height:21.3px;color:#000;font-family:'DejaVu Sans Condensed','DejaVu Sans',sans-serif;font-stretch:condensed;right:2105px;transform:scaleX(0.9518);transform-origin:100% 50%;">19</span>
<span id="t199" style="top:662.88px;font-size:21.3px;line-height:21.3px;color:#000;font-family:'DejaVu Sans Condensed','DejaVu Sans',sans-serif;font-stretch:condensed;right:1899px;transform:scaleX(0.9518);transform-origin:100% 50%;">87</span>
<span id="t200" style="top:662.88px;font-size:21.3px;line-height:21.3px;color:#000;font-family:'DejaVu Sans Condensed','DejaVu Sans',sans-serif;font-stretch:condensed;right:1693px;transform:scaleX(0.9518);transform-origin:100% 50%;">249</span>
<span id="t201" style="top:662.88px;font-size:21.3px;line-height:21.3px;color:#000;font-family:'DejaVu Sans Condensed','DejaVu Sans',sans-serif;font-stretch:condensed;right:1487px;transform:scaleX(0.9518);transform-origin:100% 50%;">525</span>
<span id="t202" style="top:662.88px;font-size:21.3px;line-height:21.3px;color:#000;font-family:'DejaVu Sans Condensed','DejaVu Sans',sans-serif;font-stretch:condensed;right:1281px;transform:scaleX(0.9518);transform-origin:100% 50%;">997</span>
<span id="t203" style="top:662.88px;font-size:21.3px;line-height:21.3px;color:#000;font-family:'DejaVu Sans',sans-serif;font-style:italic;right:860px;transform:scaleX(1.0173);transform-origin:100% 50%;">%</span>
<span id="t204" style="top:662.88px;font-size:21.3px;line-height:21.3px;color:#000;font-family:'DejaVu Sans Condensed','DejaVu Sans',sans-serif;font-stretch:condensed;font-style:italic;right:881.2px;transform:scaleX(0.9781);transform-origin:100% 50%;">6.1</span>
<span id="t205" style="top:662.88px;font-size:21.3px;line-height:21.3px;color:#000;font-family:'DejaVu Sans',sans-serif;font-style:italic;right:698px;transform:scaleX(1.0173);transform-origin:100% 50%;">%</span>
<span id="t206" style="top:662.88px;font-size:21.3px;line-height:21.3px;color:#000;font-family:'DejaVu Sans Condensed','DejaVu Sans',sans-serif;font-stretch:condensed;font-style:italic;right:719.2px;transform:scaleX(0.9781);transform-origin:100% 50%;">6.4</span>
<span id="t207" style="top:662.88px;font-size:21.3px;line-height:21.3px;color:#000;font-family:'DejaVu Sans',sans-serif;font-style:italic;right:536px;transform:scaleX(1.0173);transform-origin:100% 50%;">%</span>
<span id="t208" style="top:662.88px;font-size:21.3px;line-height:21.3px;color:#000;font-family:'DejaVu Sans Condensed','DejaVu Sans',sans-serif;font-stretch:condensed;font-style:italic;right:557.2px;transform:scaleX(0.9781);transform-origin:100% 50%;">5.8</span>
<span id="t209" style="top:662.88px;font-size:21.3px;line-height:21.3px;color:#000;font-family:'DejaVu Sans',sans-serif;font-style:italic;right:374px;transform:scaleX(1.0173);transform-origin:100% 50%;">%</span>
<span id="t210" style="top:662.88px;font-size:21.3px;line-height:21.3px;color:#000;font-family:'DejaVu Sans Condensed','DejaVu Sans',sans-serif;font-stretch:condensed;font-style:italic;right:395.2px;transform:scaleX(0.9781);transform-origin:100% 50%;">5.7</span>
<span id="t211" style="top:662.88px;font-size:21.3px;line-height:21.3px;color:#000;font-family:'DejaVu Sans',sans-serif;font-style:italic;right:212px;transform:scaleX(1.0173);transform-origin:100% 50%;">%</span>
<span id="t212" style="top:662.88px;font-size:21.3px;line-height:21.3px;color:#000;font-family:'DejaVu Sans Condensed','DejaVu Sans',sans-serif;font-stretch:condensed;font-style:italic;right:233.2px;transform:scaleX(0.9781);transform-origin:100% 50%;">5.8</span>
<span id="t213" style="top:691.78px;font-size:21.3px;line-height:21.3px;color:#000;font-family:'DejaVu Sans Condensed','DejaVu Sans',sans-serif;font-stretch:condensed;left:86px;transform:scaleX(1.0219);transform-origin:0 50%;">Other Revenue</span>
<span id="t214" style="top:691.78px;font-size:21.3px;line-height:21.3px;color:#000;font-family:'DejaVu Sans Condensed','DejaVu Sans',sans-serif;font-stretch:condensed;right:2105px;transform:scaleX(0.9518);transform-origin:100% 50%;">26</span>
<span id="t215" style="top:691.78px;font-size:21.3px;line-height:21.3px;color:#000;font-family:'DejaVu Sans Condensed','DejaVu Sans',sans-serif;font-stretch:condensed;right:1899px;transform:scaleX(0.9518);transform-origin:100% 50%;">103</span>
<span id="t216" style="top:691.78px;font-size:21.3px;line-height:21.3px;color:#000;font-family:'DejaVu Sans Condensed','DejaVu Sans',sans-serif;font-stretch:condensed;right:1693px;transform:scaleX(0.9518);transform-origin:100% 50%;">558</span>
<span id="t217" style="top:691.78px;font-size:21.3px;line-height:21.3px;color:#000;font-family:'DejaVu Sans Condensed','DejaVu Sans',sans-serif;font-stretch:condensed;right:1487px;transform:scaleX(0.9627);transform-origin:100% 50%;">1,093</span>
<span id="t218" style="top:691.78px;font-size:21.3px;line-height:21.3px;color:#000;font-family:'DejaVu Sans Condensed','DejaVu Sans',sans-serif;font-stretch:condensed;right:1281px;transform:scaleX(0.9627);transform-origin:100% 50%;">2,083</span>
<span id="t219" style="top:691.78px;font-size:21.3px;line-height:21.3px;color:#000;font-family:'DejaVu Sans',sans-serif;font-style:italic;right:860px;transform:scaleX(1.0173);transform-origin:100% 50%;">%</span>
<span id="t220" style="top:691.78px;font-size:21.3px;line-height:21.3px;color:#000;font-family:'DejaVu Sans Condensed','DejaVu Sans',sans-serif;font-stretch:condensed;font-style:italic;right:881.2px;transform:scaleX(0.9781);transform-origin:100% 50%;">8.5</span>
<span id="t221" style="top:691.78px;font-size:21.3px;line-height:21.3px;color:#000;font-family:'DejaVu Sans',sans-serif;font-style:italic;right:698px;transform:scaleX(1.0173);transform-origin:100% 50%;">%</span>
<span id="t222" style="top:691.78px;font-size:21.3px;line-height:21.3px;color:#000;font-family:'DejaVu Sans Condensed','DejaVu Sans',sans-serif;font-stretch:condensed;font-style:italic;right:719.2px;transform:scaleX(0.9781);transform-origin:100% 50%;">7.6</span>
<span id="t223" style="top:691.78px;font-size:21.3px;line-height:21.3px;color:#000;font-family:'DejaVu Sans',sans-serif;font-style:italic;right:536px;transform:scaleX(1.0173);transform-origin:100% 50%;">%</span>
<span id="t224" style="top:691.78px;font-size:21.3px;line-height:21.3px;color:#000;font-family:'DejaVu Sans Condensed','DejaVu Sans',sans-serif;font-stretch:condensed;font-style:italic;right:557.2px;transform:scaleX(0.9705);transform-origin:100% 50%;">13.1</span>
<span id="t225" style="top:691.78px;font-size:21.3px;line-height:21.3px;color:#000;font-family:'DejaVu Sans',sans-serif;font-style:italic;right:374px;transform:scaleX(1.0173);transform-origin:100% 50%;">%</span>
<span id="t226" style="top:691.78px;font-size:21.3px;line-height:21.3px;color:#000;font-family:'DejaVu Sans Condensed','DejaVu Sans',sans-serif;font-stretch:condensed;font-style:italic;right:395.2px;transform:scaleX(0.9705);transform-origin:100% 50%;">11.8</span>
<span id="t227" style="top:691.78px;font-size:21.3px;line-height:21.3px;color:#000;font-family:'DejaVu Sans',sans-serif;font-style:italic;right:212px;transform:scaleX(1.0173);transform-origin:100% 50%;">%</span>
<span id="t228" style="top:691.78px;font-size:21.3px;line-height:21.3px;color:#000;font-family:'DejaVu Sans Condensed','DejaVu Sans',sans-serif;font-stretch:condensed;font-style:italic;right:233.2px;transform:scaleX(0.9705);transform-origin:100% 50%;">12.0</span>
<div style="left:82px;top:716px;width:1552px;height:29.6px;background:#4ab2e8;"></div>
<span id="t229" style="top:719.34px;font-size:25.6px;line-height:25.6px;color:#fff;font-family:'DejaVu Sans Condensed','DejaVu Sans',sans-serif;font-stretch:condensed;font-weight:bold;-webkit-text-stroke:0.44px;left:99px;transform:scaleX(0.9756);transform-origin:0 50%;">Total Revenue</span>
<span id="t230" style="top:720.7px;font-size:21.4px;line-height:21.4px;color:#fff;font-family:'DejaVu Sans Condensed','DejaVu Sans',sans-serif;font-stretch:condensed;font-weight:bold;-webkit-text-stroke:0.36px;right:2107.5px;transform:scaleX(1.0156);transform-origin:100% 50%;">308</span>
<span id="t231" style="top:720.7px;font-size:21.4px;line-height:21.4px;color:#fff;font-family:'DejaVu Sans Condensed','DejaVu Sans',sans-serif;font-stretch:condensed;font-weight:bold;-webkit-text-stroke:0.36px;right:1901.5px;transform:scaleX(1.0086);transform-origin:100% 50%;">1,369</span>
<span id="t232" style="top:720.7px;font-size:21.4px;line-height:21.4px;color:#fff;font-family:'DejaVu Sans Condensed','DejaVu Sans',sans-serif;font-stretch:condensed;font-weight:bold;-webkit-text-stroke:0.36px;right:1695.5px;transform:scaleX(1.0086);transform-origin:100% 50%;">4,261</span>
<span id="t233" style="top:720.7px;font-size:21.4px;line-height:21.4px;color:#fff;font-family:'DejaVu Sans Condensed','DejaVu Sans',sans-serif;font-stretch:condensed;font-weight:bold;-webkit-text-stroke:0.36px;right:1489.5px;transform:scaleX(1.0086);transform-origin:100% 50%;">9,243</span>
<span id="t234" style="top:720.7px;font-size:21.4px;line-height:21.4px;color:#fff;font-family:'DejaVu Sans Condensed','DejaVu Sans',sans-serif;font-stretch:condensed;font-weight:bold;-webkit-text-stroke:0.36px;right:1283.5px;transform:scaleX(1.0099);transform-origin:100% 50%;">17,295</span>
<div style="left:1894px;top:716px;width:811px;height:29.6px;background:#4ab2e8;"></div>
<span id="t235" style="top:720.7px;font-size:21.4px;line-height:21.4px;color:#fff;font-family:'DejaVu Sans',sans-serif;font-weight:bold;font-style:italic;-webkit-text-stroke:0.36px;right:853.5px;transform:scaleX(1.0962);transform-origin:100% 50%;">%</span>
<span id="t236" style="top:720.7px;font-size:21.4px;line-height:21.4px;color:#fff;font-family:'DejaVu Sans Condensed','DejaVu Sans',sans-serif;font-stretch:condensed;font-weight:bold;font-style:italic;-webkit-text-stroke:0.36px;right:878.5px;transform:scaleX(1.0331);transform-origin:100% 50%;">100</span>
<span id="t237" style="top:720.7px;font-size:21.4px;line-height:21.4px;color:#fff;font-family:'DejaVu Sans',sans-serif;font-weight:bold;font-style:italic;-webkit-text-stroke:0.36px;right:691.5px;transform:scaleX(1.0962);transform-origin:100% 50%;">%</span>
<span id="t238" style="top:720.7px;font-size:21.4px;line-height:21.4px;color:#fff;font-family:'DejaVu Sans Condensed','DejaVu Sans',sans-serif;font-stretch:condensed;font-weight:bold;font-style:italic;-webkit-text-stroke:0.36px;right:716.5px;transform:scaleX(1.0331);transform-origin:100% 50%;">100</span>
<span id="t239" style="top:720.7px;font-size:21.4px;line-height:21.4px;color:#fff;font-family:'DejaVu Sans',sans-serif;font-weight:bold;font-style:italic;-webkit-text-stroke:0.36px;right:529.5px;transform:scaleX(1.0962);transform-origin:100% 50%;">%</span>
<span id="t240" style="top:720.7px;font-size:21.4px;line-height:21.4px;color:#fff;font-family:'DejaVu Sans Condensed','DejaVu Sans',sans-serif;font-stretch:condensed;font-weight:bold;font-style:italic;-webkit-text-stroke:0.36px;right:554.5px;transform:scaleX(1.0331);transform-origin:100% 50%;">100</span>
<span id="t241" style="top:720.7px;font-size:21.4px;line-height:21.4px;color:#fff;font-family:'DejaVu Sans',sans-serif;font-weight:bold;font-style:italic;-webkit-text-stroke:0.36px;right:367.5px;transform:scaleX(1.0962);transform-origin:100% 50%;">%</span>
<span id="t242" style="top:720.7px;font-size:21.4px;line-height:21.4px;color:#fff;font-family:'DejaVu Sans Condensed','DejaVu Sans',sans-serif;font-stretch:condensed;font-weight:bold;font-style:italic;-webkit-text-stroke:0.36px;right:392.5px;transform:scaleX(1.0331);transform-origin:100% 50%;">100</span>
<span id="t243" style="top:720.7px;font-size:21.4px;line-height:21.4px;color:#fff;font-family:'DejaVu Sans',sans-serif;font-weight:bold;font-style:italic;-webkit-text-stroke:0.36px;right:205.5px;transform:scaleX(1.0962);transform-origin:100% 50%;">%</span>
<span id="t244" style="top:720.7px;font-size:21.4px;line-height:21.4px;color:#fff;font-family:'DejaVu Sans Condensed','DejaVu Sans',sans-serif;font-stretch:condensed;font-weight:bold;font-style:italic;-webkit-text-stroke:0.36px;right:230.5px;transform:scaleX(1.0331);transform-origin:100% 50%;">100</span>
<div style="left:83px;top:767px;width:2764px;height:41.7px;background:#4b4fd1;"></div>
<span id="t245" style="top:772.87px;font-size:33.6px;line-height:33.6px;color:#fff;font-family:'DejaVu Sans Condensed','DejaVu Sans',sans-serif;font-stretch:condensed;font-weight:bold;-webkit-text-stroke:0.57px;left:1465px;transform:translateX(-50%) scaleX(1.0145);transform-origin:50% 50%;">Top 5 Revenue Streams ($&#x27;000) - 5 years to December 2030</span>
<div style="left:83px;top:1534.6px;width:1755.5px;height:42.4px;background:#4b4fd1;"></div>
<div style="left:1839.5px;top:1534.6px;width:1007.5px;height:42.4px;background:#4b4fd1;"></div>
<span id="t246" style="top:1540.27px;font-size:33.6px;line-height:33.6px;color:#fff;font-family:'DejaVu Sans Condensed','DejaVu Sans',sans-serif;font-stretch:condensed;font-weight:bold;-webkit-text-stroke:0.57px;left:960.8px;transform:translateX(-50%) scaleX(1.0211);transform-origin:50% 50%;">Revenue Depth ($&#x27;000) - 2026</span>
<span id="t247" style="top:1540.27px;font-size:33.6px;line-height:33.6px;color:#fff;font-family:'DejaVu Sans Condensed','DejaVu Sans',sans-serif;font-stretch:condensed;font-weight:bold;-webkit-text-stroke:0.57px;left:2344px;transform:translateX(-50%) scaleX(1.0282);transform-origin:50% 50%;">Monthly Run-Rate ($&#x27;000) - 2026</span>
<div style="left:2541.5px;top:1577px;width:306px;height:29px;background:#fff06a;box-sizing:border-box;border:1.5px solid #c9c9dc;border-top:none;"></div>
<span id="t248" style="top:1581.2px;font-size:21.4px;line-height:21.4px;color:#000;font-family:'DejaVu Sans Condensed','DejaVu Sans',sans-serif;font-stretch:condensed;font-weight:bold;-webkit-text-stroke:0.36px;left:2694.5px;transform:translateX(-50%) scaleX(1.0194);transform-origin:50% 50%;">2026</span>
<div style="left:83px;top:1617.7px;width:1494.3px;height:1.1px;background:#86bfdc;"></div>
<div style="left:1615.3px;top:1646.3px;width:11.5px;height:11.7px;background:#4ab2e8;"></div>
<span id="t249" style="top:1639.55px;font-size:22.4px;line-height:22.4px;color:#000;font-family:'DejaVu Sans Condensed','DejaVu Sans',sans-serif;font-stretch:condensed;font-weight:bold;-webkit-text-stroke:0.38px;left:1632.8px;">Ads / Promotion Fees</span>
</section>
<section id="chart-stacked">
<svg style="left:0px;top:0px;pointer-events:none;" width="2902" height="1762" viewBox="0 0 2902 1762"><rect x="176.4" y="1489" width="1456.4" height="1" fill="#5f7bab"/><rect x="176.4" y="1426" width="1456.4" height="1" fill="#5f7bab"/><rect x="176.4" y="1362" width="1456.4" height="1" fill="#5f7bab"/><rect x="176.4" y="1298" width="1456.4" height="1" fill="#5f7bab"/><rect x="176.4" y="1234" width="1456.4" height="1" fill="#5f7bab"/><rect x="176.4" y="1170" width="1456.4" height="1" fill="#5f7bab"/><rect x="176.4" y="1106" width="1456.4" height="1" fill="#5f7bab"/><rect x="176.4" y="1043" width="1456.4" height="1" fill="#5f7bab"/><rect x="176.4" y="979" width="1456.4" height="1" fill="#5f7bab"/><rect x="176.4" y="915" width="1456.4" height="1" fill="#5f7bab"/><rect x="176.4" y="851" width="1456.4" height="1" fill="#5f7bab"/><rect x="225.3" y="1264.92" width="194.4" height="224.88" fill="#4ab2e8"/><rect x="225.3" y="980.38" width="194.4" height="284.85" fill="#4f52d3"/><rect x="225.3" y="944.65" width="194.4" height="36.03" fill="#f17c70"/><rect x="225.3" y="905.73" width="194.4" height="39.22" fill="#f5b400"/><rect x="225.3" y="851.5" width="194.4" height="54.53" fill="#2db5a9"/><rect x="516.7" y="1246.66" width="194.4" height="243.14" fill="#4ab2e8"/><rect x="516.7" y="977.7" width="194.4" height="269.27" fill="#4f52d3"/><rect x="516.7" y="940.73" width="194.4" height="37.27" fill="#f17c70"/><rect x="516.7" y="899.94" width="194.4" height="41.09" fill="#f5b400"/><rect x="516.7" y="851.5" width="194.4" height="48.74" fill="#2db5a9"/><rect x="808" y="1246.18" width="194.4" height="243.62" fill="#4ab2e8"/><rect x="808" y="1007.97" width="194.4" height="238.51" fill="#4f52d3"/><rect x="808" y="972.2" width="194.4" height="36.06" fill="#f17c70"/><rect x="808" y="935.16" width="194.4" height="37.34" fill="#f5b400"/><rect x="808" y="851.5" width="194.4" height="83.96" fill="#2db5a9"/><rect x="1099.2" y="1228.56" width="194.4" height="261.24" fill="#4ab2e8"/><rect x="1099.2" y="999.52" width="194.4" height="229.34" fill="#4f52d3"/><rect x="1099.2" y="963.15" width="194.4" height="36.67" fill="#f17c70"/><rect x="1099.2" y="926.78" width="194.4" height="36.67" fill="#f5b400"/><rect x="1099.2" y="851.5" width="194.4" height="75.58" fill="#2db5a9"/><rect x="1390.3" y="1215.16" width="194.4" height="274.64" fill="#4ab2e8"/><rect x="1390.3" y="1003.98" width="194.4" height="211.48" fill="#4f52d3"/><rect x="1390.3" y="965.06" width="194.4" height="39.22" fill="#f17c70"/><rect x="1390.3" y="928.06" width="194.4" height="37.3" fill="#f5b400"/><rect x="1390.3" y="851.5" width="194.4" height="76.86" fill="#2db5a9"/><rect x="293.05" y="1359.21" width="58.9" height="36" fill="#dce9f6"/><rect x="289.85" y="1104.65" width="65.3" height="36" fill="#b0b0ee"/><rect x="296.95" y="944.51" width="51.1" height="36" fill="#f8c9ae"/><rect x="296.95" y="907.19" width="51.1" height="36" fill="#fdf0d0"/><rect x="300.15" y="860.62" width="44.7" height="36" fill="#dceedd"/><rect x="584.45" y="1350.08" width="58.9" height="36" fill="#dce9f6"/><rect x="581.25" y="1094.18" width="65.3" height="36" fill="#b0b0ee"/><rect x="588.35" y="941.21" width="51.1" height="36" fill="#f8c9ae"/><rect x="588.35" y="902.34" width="51.1" height="36" fill="#fdf0d0"/><rect x="584.45" y="857.72" width="58.9" height="36" fill="#dceedd"/><rect x="864.85" y="1349.84" width="80.7" height="36" fill="#dce9f6"/><rect x="861.65" y="1109.07" width="87.1" height="36" fill="#b0b0ee"/><rect x="872.55" y="972.08" width="65.3" height="36" fill="#f8c9ae"/><rect x="872.55" y="935.68" width="65.3" height="36" fill="#fdf0d0"/><rect x="875.75" y="875.33" width="58.9" height="36" fill="#dceedd"/><rect x="1156.05" y="1341.03" width="80.7" height="36" fill="#dce9f6"/><rect x="1152.85" y="1096.04" width="87.1" height="36" fill="#b0b0ee"/><rect x="1163.75" y="963.33" width="65.3" height="36" fill="#f8c9ae"/><rect x="1163.75" y="926.97" width="65.3" height="36" fill="#fdf0d0"/><rect x="1156.05" y="871.14" width="80.7" height="36" fill="#dceedd"/><rect x="1447.15" y="1334.33" width="80.7" height="36" fill="#dce9f6"/><rect x="1443.95" y="1091.57" width="87.1" height="36" fill="#b0b0ee"/><rect x="1443.95" y="966.52" width="87.1" height="36" fill="#f8c9ae"/><rect x="1454.85" y="928.56" width="65.3" height="36" fill="#fdf0d0"/><rect x="1447.15" y="871.78" width="80.7" height="36" fill="#dceedd"/></svg>
<span id="t250" style="top:1366.36px;font-size:22.4px;line-height:22.4px;color:#000;font-family:'DejaVu Sans Condensed','DejaVu Sans',sans-serif;font-stretch:condensed;font-weight:bold;-webkit-text-stroke:0.38px;left:322.8px;transform:translateX(-50%) scaleX(1.0128);transform-origin:50% 50%;">108</span>
<span id="t251" style="top:1111.8px;font-size:22.4px;line-height:22.4px;color:#000;font-family:'DejaVu Sans Condensed','DejaVu Sans',sans-serif;font-stretch:condensed;font-weight:bold;-webkit-text-stroke:0.38px;left:326px;transform:translateX(-50%) scaleX(1.0128);transform-origin:50% 50%;">137</span>
<span id="t252" style="top:951.66px;font-size:22.4px;line-height:22.4px;color:#000;font-family:'DejaVu Sans Condensed','DejaVu Sans',sans-serif;font-stretch:condensed;font-weight:bold;-webkit-text-stroke:0.38px;left:326px;transform:translateX(-50%) scaleX(1.0126);transform-origin:50% 50%;">17</span>
<span id="t253" style="top:914.34px;font-size:22.4px;line-height:22.4px;color:#000;font-family:'DejaVu Sans Condensed','DejaVu Sans',sans-serif;font-stretch:condensed;font-weight:bold;-webkit-text-stroke:0.38px;left:326px;transform:translateX(-50%) scaleX(1.0126);transform-origin:50% 50%;">19</span>
<span id="t254" style="top:867.76px;font-size:22.4px;line-height:22.4px;color:#000;font-family:'DejaVu Sans Condensed','DejaVu Sans',sans-serif;font-stretch:condensed;font-weight:bold;-webkit-text-stroke:0.38px;left:322.8px;transform:translateX(-50%) scaleX(1.0126);transform-origin:50% 50%;">26</span>
<span id="t255" style="top:1357.23px;font-size:22.4px;line-height:22.4px;color:#000;font-family:'DejaVu Sans Condensed','DejaVu Sans',sans-serif;font-stretch:condensed;font-weight:bold;-webkit-text-stroke:0.38px;left:614.2px;transform:translateX(-50%) scaleX(1.0128);transform-origin:50% 50%;">522</span>
<span id="t256" style="top:1101.33px;font-size:22.4px;line-height:22.4px;color:#000;font-family:'DejaVu Sans Condensed','DejaVu Sans',sans-serif;font-stretch:condensed;font-weight:bold;-webkit-text-stroke:0.38px;left:617.4px;transform:translateX(-50%) scaleX(1.0128);transform-origin:50% 50%;">578</span>
<span id="t257" style="top:948.36px;font-size:22.4px;line-height:22.4px;color:#000;font-family:'DejaVu Sans Condensed','DejaVu Sans',sans-serif;font-stretch:condensed;font-weight:bold;-webkit-text-stroke:0.38px;left:617.4px;transform:translateX(-50%) scaleX(1.0126);transform-origin:50% 50%;">79</span>
<span id="t258" style="top:909.48px;font-size:22.4px;line-height:22.4px;color:#000;font-family:'DejaVu Sans Condensed','DejaVu Sans',sans-serif;font-stretch:condensed;font-weight:bold;-webkit-text-stroke:0.38px;left:617.4px;transform:translateX(-50%) scaleX(1.0126);transform-origin:50% 50%;">87</span>
<span id="t259" style="top:864.87px;font-size:22.4px;line-height:22.4px;color:#000;font-family:'DejaVu Sans Condensed','DejaVu Sans',sans-serif;font-stretch:condensed;font-weight:bold;-webkit-text-stroke:0.38px;left:614.2px;transform:translateX(-50%) scaleX(1.0128);transform-origin:50% 50%;">103</span>
<span id="t260" style="top:1356.99px;font-size:22.4px;line-height:22.4px;color:#000;font-family:'DejaVu Sans Condensed','DejaVu Sans',sans-serif;font-stretch:condensed;font-weight:bold;-webkit-text-stroke:0.38px;left:905.5px;transform:translateX(-50%) scaleX(1.0107);transform-origin:50% 50%;">1,624</span>
<span id="t261" style="top:1116.22px;font-size:22.4px;line-height:22.4px;color:#000;font-family:'DejaVu Sans Condensed','DejaVu Sans',sans-serif;font-stretch:condensed;font-weight:bold;-webkit-text-stroke:0.38px;left:908.7px;transform:translateX(-50%) scaleX(1.0107);transform-origin:50% 50%;">1,590</span>
<span id="t262" style="top:979.23px;font-size:22.4px;line-height:22.4px;color:#000;font-family:'DejaVu Sans Condensed','DejaVu Sans',sans-serif;font-stretch:condensed;font-weight:bold;-webkit-text-stroke:0.38px;left:908.7px;transform:translateX(-50%) scaleX(1.0128);transform-origin:50% 50%;">239</span>
<span id="t263" style="top:942.83px;font-size:22.4px;line-height:22.4px;color:#000;font-family:'DejaVu Sans Condensed','DejaVu Sans',sans-serif;font-stretch:condensed;font-weight:bold;-webkit-text-stroke:0.38px;left:908.7px;transform:translateX(-50%) scaleX(1.0128);transform-origin:50% 50%;">249</span>
<span id="t264" style="top:882.48px;font-size:22.4px;line-height:22.4px;color:#000;font-family:'DejaVu Sans Condensed','DejaVu Sans',sans-serif;font-stretch:condensed;font-weight:bold;-webkit-text-stroke:0.38px;left:905.5px;transform:translateX(-50%) scaleX(1.0128);transform-origin:50% 50%;">558</span>
<span id="t265" style="top:1348.18px;font-size:22.4px;line-height:22.4px;color:#000;font-family:'DejaVu Sans Condensed','DejaVu Sans',sans-serif;font-stretch:condensed;font-weight:bold;-webkit-text-stroke:0.38px;left:1196.7px;transform:translateX(-50%) scaleX(1.0107);transform-origin:50% 50%;">3,778</span>
<span id="t266" style="top:1103.19px;font-size:22.4px;line-height:22.4px;color:#000;font-family:'DejaVu Sans Condensed','DejaVu Sans',sans-serif;font-stretch:condensed;font-weight:bold;-webkit-text-stroke:0.38px;left:1199.9px;transform:translateX(-50%) scaleX(1.0107);transform-origin:50% 50%;">3,318</span>
<span id="t267" style="top:970.48px;font-size:22.4px;line-height:22.4px;color:#000;font-family:'DejaVu Sans Condensed','DejaVu Sans',sans-serif;font-stretch:condensed;font-weight:bold;-webkit-text-stroke:0.38px;left:1199.9px;transform:translateX(-50%) scaleX(1.0128);transform-origin:50% 50%;">529</span>
<span id="t268" style="top:934.12px;font-size:22.4px;line-height:22.4px;color:#000;font-family:'DejaVu Sans Condensed','DejaVu Sans',sans-serif;font-stretch:condensed;font-weight:bold;-webkit-text-stroke:0.38px;left:1199.9px;transform:translateX(-50%) scaleX(1.0128);transform-origin:50% 50%;">525</span>
<span id="t269" style="top:878.29px;font-size:22.4px;line-height:22.4px;color:#000;font-family:'DejaVu Sans Condensed','DejaVu Sans',sans-serif;font-stretch:condensed;font-weight:bold;-webkit-text-stroke:0.38px;left:1196.7px;transform:translateX(-50%) scaleX(1.0107);transform-origin:50% 50%;">1,093</span>
<span id="t270" style="top:1341.48px;font-size:22.4px;line-height:22.4px;color:#000;font-family:'DejaVu Sans Condensed','DejaVu Sans',sans-serif;font-stretch:condensed;font-weight:bold;-webkit-text-stroke:0.38px;left:1487.8px;transform:translateX(-50%) scaleX(1.0107);transform-origin:50% 50%;">7,445</span>
<span id="t271" style="top:1098.72px;font-size:22.4px;line-height:22.4px;color:#000;font-family:'DejaVu Sans Condensed','DejaVu Sans',sans-serif;font-stretch:condensed;font-weight:bold;-webkit-text-stroke:0.38px;left:1491px;transform:translateX(-50%) scaleX(1.0107);transform-origin:50% 50%;">5,720</span>
<span id="t272" style="top:973.67px;font-size:22.4px;line-height:22.4px;color:#000;font-family:'DejaVu Sans Condensed','DejaVu Sans',sans-serif;font-stretch:condensed;font-weight:bold;-webkit-text-stroke:0.38px;left:1491px;transform:translateX(-50%) scaleX(1.0107);transform-origin:50% 50%;">1,051</span>
<span id="t273" style="top:935.71px;font-size:22.4px;line-height:22.4px;color:#000;font-family:'DejaVu Sans Condensed','DejaVu Sans',sans-serif;font-stretch:condensed;font-weight:bold;-webkit-text-stroke:0.38px;left:1491px;transform:translateX(-50%) scaleX(1.0128);transform-origin:50% 50%;">997</span>
<span id="t274" style="top:878.93px;font-size:22.4px;line-height:22.4px;color:#000;font-family:'DejaVu Sans Condensed','DejaVu Sans',sans-serif;font-stretch:condensed;font-weight:bold;-webkit-text-stroke:0.38px;left:1487.8px;transform:translateX(-50%) scaleX(1.0107);transform-origin:50% 50%;">2,083</span>
<span id="t275" style="top:1478.05px;font-size:22.4px;line-height:22.4px;color:#000;font-family:'DejaVu Sans',sans-serif;font-weight:bold;-webkit-text-stroke:0.38px;right:2747.4px;transform:scaleX(1.0563);transform-origin:100% 50%;">%</span>
<span id="t276" style="top:1478.05px;font-size:22.4px;line-height:22.4px;color:#000;font-family:'DejaVu Sans Condensed','DejaVu Sans',sans-serif;font-stretch:condensed;font-weight:bold;-webkit-text-stroke:0.38px;right:2772.7px;transform:scaleX(0.9265);transform-origin:100% 50%;">0</span>
<span id="t277" style="top:1415.05px;font-size:22.4px;line-height:22.4px;color:#000;font-family:'DejaVu Sans',sans-serif;font-weight:bold;-webkit-text-stroke:0.38px;right:2747.4px;transform:scaleX(1.0563);transform-origin:100% 50%;">%</span>
<span id="t278" style="top:1415.05px;font-size:22.4px;line-height:22.4px;color:#000;font-family:'DejaVu Sans Condensed','DejaVu Sans',sans-serif;font-stretch:condensed;font-weight:bold;-webkit-text-stroke:0.38px;right:2772.7px;transform:scaleX(0.9698);transform-origin:100% 50%;">10</span>
<span id="t279" style="top:1351.05px;font-size:22.4px;line-height:22.4px;color:#000;font-family:'DejaVu Sans',sans-serif;font-weight:bold;-webkit-text-stroke:0.38px;right:2747.4px;transform:scaleX(1.0563);transform-origin:100% 50%;">%</span>
<span id="t280" style="top:1351.05px;font-size:22.4px;line-height:22.4px;color:#000;font-family:'DejaVu Sans Condensed','DejaVu Sans',sans-serif;font-stretch:condensed;font-weight:bold;-webkit-text-stroke:0.38px;right:2772.7px;transform:scaleX(0.9698);transform-origin:100% 50%;">20</span>
<span id="t281" style="top:1287.05px;font-size:22.4px;line-height:22.4px;color:#000;font-family:'DejaVu Sans',sans-serif;font-weight:bold;-webkit-text-stroke:0.38px;right:2747.4px;transform:scaleX(1.0563);transform-origin:100% 50%;">%</span>
<span id="t282" style="top:1287.05px;font-size:22.4px;line-height:22.4px;color:#000;font-family:'DejaVu Sans Condensed','DejaVu Sans',sans-serif;font-stretch:condensed;font-weight:bold;-webkit-text-stroke:0.38px;right:2772.7px;transform:scaleX(0.9698);transform-origin:100% 50%;">30</span>
<span id="t283" style="top:1223.05px;font-size:22.4px;line-height:22.4px;color:#000;font-family:'DejaVu Sans',sans-serif;font-weight:bold;-webkit-text-stroke:0.38px;right:2747.4px;transform:scaleX(1.0563);transform-origin:100% 50%;">%</span>
<span id="t284" style="top:1223.05px;font-size:22.4px;line-height:22.4px;color:#000;font-family:'DejaVu Sans Condensed','DejaVu Sans',sans-serif;font-stretch:condensed;font-weight:bold;-webkit-text-stroke:0.38px;right:2772.7px;transform:scaleX(0.9698);transform-origin:100% 50%;">40</span>
<span id="t285" style="top:1159.05px;font-size:22.4px;line-height:22.4px;color:#000;font-family:'DejaVu Sans',sans-serif;font-weight:bold;-webkit-text-stroke:0.38px;right:2747.4px;transform:scaleX(1.0563);transform-origin:100% 50%;">%</span>
<span id="t286" style="top:1159.05px;font-size:22.4px;line-height:22.4px;color:#000;font-family:'DejaVu Sans Condensed','DejaVu Sans',sans-serif;font-stretch:condensed;font-weight:bold;-webkit-text-stroke:0.38px;right:2772.7px;transform:scaleX(0.9698);transform-origin:100% 50%;">50</span>
<span id="t287" style="top:1095.05px;font-size:22.4px;line-height:22.4px;color:#000;font-family:'DejaVu Sans',sans-serif;font-weight:bold;-webkit-text-stroke:0.38px;right:2747.4px;transform:scaleX(1.0563);transform-origin:100% 50%;">%</span>
<span id="t288" style="top:1095.05px;font-size:22.4px;line-height:22.4px;color:#000;font-family:'DejaVu Sans Condensed','DejaVu Sans',sans-serif;font-stretch:condensed;font-weight:bold;-webkit-text-stroke:0.38px;right:2772.7px;transform:scaleX(0.9698);transform-origin:100% 50%;">60</span>
<span id="t289" style="top:1032.05px;font-size:22.4px;line-height:22.4px;color:#000;font-family:'DejaVu Sans',sans-serif;font-weight:bold;-webkit-text-stroke:0.38px;right:2747.4px;transform:scaleX(1.0563);transform-origin:100% 50%;">%</span>
<span id="t290" style="top:1032.05px;font-size:22.4px;line-height:22.4px;color:#000;font-family:'DejaVu Sans Condensed','DejaVu Sans',sans-serif;font-stretch:condensed;font-weight:bold;-webkit-text-stroke:0.38px;right:2772.7px;transform:scaleX(0.9698);transform-origin:100% 50%;">70</span>
<span id="t291" style="top:968.05px;font-size:22.4px;line-height:22.4px;color:#000;font-family:'DejaVu Sans',sans-serif;font-weight:bold;-webkit-text-stroke:0.38px;right:2747.4px;transform:scaleX(1.0563);transform-origin:100% 50%;">%</span>
<span id="t292" style="top:968.05px;font-size:22.4px;line-height:22.4px;color:#000;font-family:'DejaVu Sans Condensed','DejaVu Sans',sans-serif;font-stretch:condensed;font-weight:bold;-webkit-text-stroke:0.38px;right:2772.7px;transform:scaleX(0.9698);transform-origin:100% 50%;">80</span>
<span id="t293" style="top:904.05px;font-size:22.4px;line-height:22.4px;color:#000;font-family:'DejaVu Sans',sans-serif;font-weight:bold;-webkit-text-stroke:0.38px;right:2747.4px;transform:scaleX(1.0563);transform-origin:100% 50%;">%</span>
<span id="t294" style="top:904.05px;font-size:22.4px;line-height:22.4px;color:#000;font-family:'DejaVu Sans Condensed','DejaVu Sans',sans-serif;font-stretch:condensed;font-weight:bold;-webkit-text-stroke:0.38px;right:2772.7px;transform:scaleX(0.9698);transform-origin:100% 50%;">90</span>
<span id="t295" style="top:840.05px;font-size:22.4px;line-height:22.4px;color:#000;font-family:'DejaVu Sans',sans-serif;font-weight:bold;-webkit-text-stroke:0.38px;right:2747.4px;transform:scaleX(1.0563);transform-origin:100% 50%;">%</span>
<span id="t296" style="top:840.05px;font-size:22.4px;line-height:22.4px;color:#000;font-family:'DejaVu Sans Condensed','DejaVu Sans',sans-serif;font-stretch:condensed;font-weight:bold;-webkit-text-stroke:0.38px;right:2772.7px;transform:scaleX(0.9842);transform-origin:100% 50%;">100</span>
<span id="t297" style="top:1506.85px;font-size:22.4px;line-height:22.4px;color:#000;font-family:'DejaVu Sans Condensed','DejaVu Sans',sans-serif;font-stretch:condensed;font-weight:bold;-webkit-text-stroke:0.38px;left:322.5px;transform:translateX(-50%) scaleX(1.0129);transform-origin:50% 50%;">2026</span>
<span id="t298" style="top:1506.85px;font-size:22.4px;line-height:22.4px;color:#000;font-family:'DejaVu Sans Condensed','DejaVu Sans',sans-serif;font-stretch:condensed;font-weight:bold;-webkit-text-stroke:0.38px;left:613.9px;transform:translateX(-50%) scaleX(1.0129);transform-origin:50% 50%;">2027</span>
<span id="t299" style="top:1506.85px;font-size:22.4px;line-height:22.4px;color:#000;font-family:'DejaVu Sans Condensed','DejaVu Sans',sans-serif;font-stretch:condensed;font-weight:bold;-webkit-text-stroke:0.38px;left:905.2px;transform:translateX(-50%) scaleX(1.0129);transform-origin:50% 50%;">2028</span>
<span id="t300" style="top:1506.85px;font-size:22.4px;line-height:22.4px;color:#000;font-family:'DejaVu Sans Condensed','DejaVu Sans',sans-serif;font-stretch:condensed;font-weight:bold;-webkit-text-stroke:0.38px;left:1196.4px;transform:translateX(-50%) scaleX(1.0129);transform-origin:50% 50%;">2029</span>
<span id="t301" style="top:1506.85px;font-size:22.4px;line-height:22.4px;color:#000;font-family:'DejaVu Sans Condensed','DejaVu Sans',sans-serif;font-stretch:condensed;font-weight:bold;-webkit-text-stroke:0.38px;left:1487.5px;transform:translateX(-50%) scaleX(1.0129);transform-origin:50% 50%;">2030</span>
</section>
<section id="chart-legend">
<span id="t302" style="top:877.53px;font-size:21.6px;line-height:21.6px;color:#000;font-family:'DejaVu Sans Condensed','DejaVu Sans',sans-serif;font-stretch:condensed;font-weight:bold;-webkit-text-stroke:0.37px;left:1703.4px;transform:scaleX(1.0485);transform-origin:0 50%;">Ads / Promotion</span>
<span id="t303" style="top:904.13px;font-size:21.6px;line-height:21.6px;color:#000;font-family:'DejaVu Sans Condensed','DejaVu Sans',sans-serif;font-stretch:condensed;font-weight:bold;-webkit-text-stroke:0.37px;left:1703.4px;transform:scaleX(1.0233);transform-origin:0 50%;">Fees</span>
<span id="t304" style="top:1009.73px;font-size:21.6px;line-height:21.6px;color:#000;font-family:'DejaVu Sans Condensed','DejaVu Sans',sans-serif;font-stretch:condensed;font-weight:bold;-webkit-text-stroke:0.37px;left:1703.4px;transform:scaleX(1.0287);transform-origin:0 50%;">Commission</span>
<span id="t305" style="top:1036.33px;font-size:21.6px;line-height:21.6px;color:#000;font-family:'DejaVu Sans Condensed','DejaVu Sans',sans-serif;font-stretch:condensed;font-weight:bold;-webkit-text-stroke:0.37px;left:1703.4px;transform:scaleX(1.0333);transform-origin:0 50%;">Revenue</span>
<span id="t306" style="top:1141.73px;font-size:21.6px;line-height:21.6px;color:#000;font-family:'DejaVu Sans Condensed','DejaVu Sans',sans-serif;font-stretch:condensed;font-weight:bold;-webkit-text-stroke:0.37px;left:1703.4px;transform:scaleX(1.0193);transform-origin:0 50%;">Sellers Subscription -</span>
<span id="t307" style="top:1168.33px;font-size:21.6px;line-height:21.6px;color:#000;font-family:'DejaVu Sans Condensed','DejaVu Sans',sans-serif;font-stretch:condensed;font-weight:bold;-webkit-text-stroke:0.37px;left:1703.4px;transform:scaleX(1.022);transform-origin:0 50%;">Brands</span>
<span id="t308" style="top:1273.73px;font-size:21.6px;line-height:21.6px;color:#000;font-family:'DejaVu Sans Condensed','DejaVu Sans',sans-serif;font-stretch:condensed;font-weight:bold;-webkit-text-stroke:0.37px;left:1703.4px;transform:scaleX(1.0193);transform-origin:0 50%;">Sellers Subscription -</span>
<span id="t309" style="top:1300.33px;font-size:21.6px;line-height:21.6px;color:#000;font-family:'DejaVu Sans Condensed','DejaVu Sans',sans-serif;font-stretch:condensed;font-weight:bold;-webkit-text-stroke:0.37px;left:1703.4px;transform:scaleX(1.0232);transform-origin:0 50%;">Small Biz</span>
<span id="t310" style="top:1405.73px;font-size:21.6px;line-height:21.6px;color:#000;font-family:'DejaVu Sans Condensed','DejaVu Sans',sans-serif;font-stretch:condensed;font-weight:bold;-webkit-text-stroke:0.37px;left:1703.4px;transform:scaleX(1.0244);transform-origin:0 50%;">Other Revenue</span>
<svg style="left:0px;top:0px;pointer-events:none;" width="2902" height="1762" viewBox="0 0 2902 1762"><rect x="1642" y="886.7" width="57.5" height="4.2" rx="2.1" fill="#4ab2e8"/><circle cx="1670" cy="888.8" r="5.3" fill="#4ab2e8"/><rect x="1642" y="1018.9" width="57.5" height="4.2" rx="2.1" fill="#4f52d3"/><rect x="1665" y="1015.5" width="11" height="11" fill="#4f52d3"/><rect x="1642" y="1150.9" width="57.5" height="4.2" rx="2.1" fill="#f17c70"/><path d="M1670.5 1147.5 l5.5 9.5 h-11 z" fill="#f17c70"/><rect x="1642" y="1282.9" width="57.5" height="4.2" rx="2.1" fill="#f5b400"/><path d="M1665.5 1280 l10 10 m0 -10 l-10 10" stroke="#e9a400" stroke-width="1.3" fill="none"/><rect x="1642" y="1414.9" width="57.5" height="4.2" rx="2.1" fill="#2db5a9"/><rect x="1665" y="1411.5" width="11" height="11" fill="#5cb567"/></svg>
</section>
<section id="chart-line">
<svg style="left:0px;top:0px;pointer-events:none;" width="2902" height="1762" viewBox="0 0 2902 1762"><rect x="2069.2" y="1487" width="777.3" height="1" fill="#6ea3c2"/><rect x="2069.2" y="1408" width="777.3" height="1" fill="#6ea3c2"/><rect x="2069.2" y="1328" width="777.3" height="1" fill="#6ea3c2"/><rect x="2069.2" y="1248" width="777.3" height="1" fill="#6ea3c2"/><rect x="2069.2" y="1169" width="777.3" height="1" fill="#6ea3c2"/><rect x="2069.2" y="1090" width="777.3" height="1" fill="#6ea3c2"/><rect x="2069.2" y="1010" width="777.3" height="1" fill="#6ea3c2"/><rect x="2069.2" y="930" width="777.3" height="1" fill="#6ea3c2"/><rect x="2069.2" y="851" width="777.3" height="1" fill="#6ea3c2"/><polyline points="2147,1478.91 2302.6,1446 2458.1,1358.39 2613.6,1187.15 2769,895.62" fill="none" stroke="#4ab2e8" stroke-width="3.7" stroke-linejoin="round" stroke-linecap="round"/><circle cx="2147" cy="1478.91" r="6.6" fill="#4ab2e8"/><circle cx="2302.6" cy="1446" r="6.6" fill="#4ab2e8"/><circle cx="2458.1" cy="1358.39" r="6.6" fill="#4ab2e8"/><circle cx="2613.6" cy="1187.15" r="6.6" fill="#4ab2e8"/><circle cx="2769" cy="895.62" r="6.6" fill="#4ab2e8"/><polyline points="2147,1476.61 2302.6,1441.55 2458.1,1361.1 2613.6,1223.72 2769,1032.76" fill="none" stroke="#4f52d3" stroke-width="3.7" stroke-linejoin="round" stroke-linecap="round"/><rect x="2138.5" y="1468.11" width="17" height="17" fill="#4f52d3"/><rect x="2294.1" y="1433.05" width="17" height="17" fill="#4f52d3"/><rect x="2449.6" y="1352.6" width="17" height="17" fill="#4f52d3"/><rect x="2605.1" y="1215.22" width="17" height="17" fill="#4f52d3"/><rect x="2760.5" y="1024.26" width="17" height="17" fill="#4f52d3"/><polyline points="2147,1486.15 2302.6,1481.22 2458.1,1468.5 2613.6,1445.44 2769,1403.95" fill="none" stroke="#f17c70" stroke-width="3.7" stroke-linejoin="round" stroke-linecap="round"/><path d="M2147 1477.65 l8.5 15 h-17 z" fill="#f17c70"/><path d="M2302.6 1472.72 l8.5 15 h-17 z" fill="#f17c70"/><path d="M2458.1 1460 l8.5 15 h-17 z" fill="#f17c70"/><path d="M2613.6 1436.94 l8.5 15 h-17 z" fill="#f17c70"/><path d="M2769 1395.45 l8.5 15 h-17 z" fill="#f17c70"/><polyline points="2147,1485.99 2302.6,1480.58 2458.1,1467.7 2613.6,1445.76 2769,1408.24" fill="none" stroke="#f5b400" stroke-width="3.7" stroke-linejoin="round" stroke-linecap="round"/><rect x="2138.5" y="1477.49" width="17" height="17" fill="#f5b400"/><rect x="2294.1" y="1472.08" width="17" height="17" fill="#f5b400"/><rect x="2449.6" y="1459.2" width="17" height="17" fill="#f5b400"/><rect x="2605.1" y="1437.26" width="17" height="17" fill="#f5b400"/><rect x="2760.5" y="1399.74" width="17" height="17" fill="#f5b400"/><polyline points="2147,1485.43 2302.6,1479.31 2458.1,1443.14 2613.6,1400.61 2769,1321.9" fill="none" stroke="#2db5a9" stroke-width="3.7" stroke-linejoin="round" stroke-linecap="round"/><rect x="2138.5" y="1476.93" width="17" height="17" fill="#2db5a9"/><rect x="2294.1" y="1470.81" width="17" height="17" fill="#2db5a9"/><rect x="2449.6" y="1434.64" width="17" height="17" fill="#2db5a9"/><rect x="2605.1" y="1392.11" width="17" height="17" fill="#2db5a9"/><rect x="2760.5" y="1313.4" width="17" height="17" fill="#2db5a9"/></svg>
<span id="t311" style="top:1396.85px;font-size:22.4px;line-height:22.4px;color:#000;font-family:'DejaVu Sans Condensed','DejaVu Sans',sans-serif;font-stretch:condensed;font-weight:bold;-webkit-text-stroke:0.38px;right:862.4px;transform:scaleX(1.0107);transform-origin:100% 50%;">1,000</span>
<span id="t312" style="top:1317.35px;font-size:22.4px;line-height:22.4px;color:#000;font-family:'DejaVu Sans Condensed','DejaVu Sans',sans-serif;font-stretch:condensed;font-weight:bold;-webkit-text-stroke:0.38px;right:862.4px;transform:scaleX(1.0107);transform-origin:100% 50%;">2,000</span>
<span id="t313" style="top:1237.85px;font-size:22.4px;line-height:22.4px;color:#000;font-family:'DejaVu Sans Condensed','DejaVu Sans',sans-serif;font-stretch:condensed;font-weight:bold;-webkit-text-stroke:0.38px;right:862.4px;transform:scaleX(1.0107);transform-origin:100% 50%;">3,000</span>
<span id="t314" style="top:1158.35px;font-size:22.4px;line-height:22.4px;color:#000;font-family:'DejaVu Sans Condensed','DejaVu Sans',sans-serif;font-stretch:condensed;font-weight:bold;-webkit-text-stroke:0.38px;right:862.4px;transform:scaleX(1.0107);transform-origin:100% 50%;">4,000</span>
<span id="t315" style="top:1078.85px;font-size:22.4px;line-height:22.4px;color:#000;font-family:'DejaVu Sans Condensed','DejaVu Sans',sans-serif;font-stretch:condensed;font-weight:bold;-webkit-text-stroke:0.38px;right:862.4px;transform:scaleX(1.0107);transform-origin:100% 50%;">5,000</span>
<span id="t316" style="top:999.35px;font-size:22.4px;line-height:22.4px;color:#000;font-family:'DejaVu Sans Condensed','DejaVu Sans',sans-serif;font-stretch:condensed;font-weight:bold;-webkit-text-stroke:0.38px;right:862.4px;transform:scaleX(1.0107);transform-origin:100% 50%;">6,000</span>
<span id="t317" style="top:919.85px;font-size:22.4px;line-height:22.4px;color:#000;font-family:'DejaVu Sans Condensed','DejaVu Sans',sans-serif;font-stretch:condensed;font-weight:bold;-webkit-text-stroke:0.38px;right:862.4px;transform:scaleX(1.0107);transform-origin:100% 50%;">7,000</span>
<span id="t318" style="top:840.35px;font-size:22.4px;line-height:22.4px;color:#000;font-family:'DejaVu Sans Condensed','DejaVu Sans',sans-serif;font-stretch:condensed;font-weight:bold;-webkit-text-stroke:0.38px;right:862.4px;transform:scaleX(1.0107);transform-origin:100% 50%;">8,000</span>
<span id="t319" style="top:1475.65px;font-size:22.4px;line-height:22.4px;color:#000;font-family:'DejaVu Sans Condensed','DejaVu Sans',sans-serif;font-stretch:condensed;font-weight:bold;-webkit-text-stroke:0.38px;right:861.5px;">-</span>
<span id="t320" style="top:1505.05px;font-size:22.4px;line-height:22.4px;color:#000;font-family:'DejaVu Sans Condensed','DejaVu Sans',sans-serif;font-stretch:condensed;font-weight:bold;-webkit-text-stroke:0.38px;left:2147px;transform:translateX(-50%) scaleX(1.0129);transform-origin:50% 50%;">2026</span>
<span id="t321" style="top:1505.05px;font-size:22.4px;line-height:22.4px;color:#000;font-family:'DejaVu Sans Condensed','DejaVu Sans',sans-serif;font-stretch:condensed;font-weight:bold;-webkit-text-stroke:0.38px;left:2302.6px;transform:translateX(-50%) scaleX(1.0129);transform-origin:50% 50%;">2027</span>
<span id="t322" style="top:1505.05px;font-size:22.4px;line-height:22.4px;color:#000;font-family:'DejaVu Sans Condensed','DejaVu Sans',sans-serif;font-stretch:condensed;font-weight:bold;-webkit-text-stroke:0.38px;left:2458.1px;transform:translateX(-50%) scaleX(1.0129);transform-origin:50% 50%;">2028</span>
<span id="t323" style="top:1505.05px;font-size:22.4px;line-height:22.4px;color:#000;font-family:'DejaVu Sans Condensed','DejaVu Sans',sans-serif;font-stretch:condensed;font-weight:bold;-webkit-text-stroke:0.38px;left:2613.6px;transform:translateX(-50%) scaleX(1.0129);transform-origin:50% 50%;">2029</span>
<span id="t324" style="top:1505.05px;font-size:22.4px;line-height:22.4px;color:#000;font-family:'DejaVu Sans Condensed','DejaVu Sans',sans-serif;font-stretch:condensed;font-weight:bold;-webkit-text-stroke:0.38px;left:2769px;transform:translateX(-50%) scaleX(1.0129);transform-origin:50% 50%;">2030</span>
</section>
<section id="vscroll">
<div style="left:2860px;top:278px;width:31px;height:1391.6px;background:#0a0a0a;"></div>
<svg style="left:0px;top:0px;" width="2902" height="1762" viewBox="0 0 2902 1762"><rect x="2862.5" y="280" width="27" height="1388" rx="13.5" fill="#161616"/><path d="M2869 296 h14 l-7 -10 z M2869 1653 h14 l-7 10 z" fill="#a8a8a8"/><rect x="2870.6" y="306" width="11" height="560" rx="5.5" fill="#9c9c9c"/></svg>
</section>
<section id="sheet-tabs">
<div style="left:11px;top:1669.6px;width:2880px;height:48.4px;background:#0a0a0a;"></div>
<div style="left:177px;top:1676px;width:88.8px;height:36px;background:#fff06a;border-radius:6px;"></div>
<span id="t325" style="top:1685.86px;font-size:20.5px;line-height:20.5px;color:#1b1b1b;left:221.4px;transform:translateX(-50%) scaleX(0.9733);transform-origin:50% 50%;">Payroll</span>
<div style="left:279px;top:1676px;width:86.7px;height:36px;background:#fff06a;border-radius:6px;"></div>
<span id="t326" style="top:1685.86px;font-size:20.5px;line-height:20.5px;color:#1b1b1b;left:322.35px;transform:translateX(-50%) scaleX(0.8777);transform-origin:50% 50%;">CAPEX</span>
<div style="left:271.8px;top:1680px;width:1.2px;height:27.5px;background:#555;"></div>
<div style="left:379px;top:1676px;width:112.9px;height:36px;background:#fff06a;border-radius:6px;"></div>
<span id="t327" style="top:1685.86px;font-size:20.5px;line-height:20.5px;color:#1b1b1b;left:435.45px;transform:translateX(-50%) scaleX(0.9928);transform-origin:50% 50%;">CapTable</span>
<div style="left:371.75px;top:1680px;width:1.2px;height:27.5px;background:#555;"></div>
<div style="left:504.9px;top:1676px;width:90.1px;height:36px;background:#fff06a;border-radius:6px;"></div>
<span id="t328" style="top:1685.86px;font-size:20.5px;line-height:20.5px;color:#1b1b1b;left:549.95px;transform:translateX(-50%);">Capital</span>
<div style="left:497.8px;top:1680px;width:1.2px;height:27.5px;background:#555;"></div>
<div style="left:608px;top:1676px;width:41.8px;height:36px;background:#4ab2e8;border-radius:6px;"></div>
<span id="t329" style="top:1685.86px;font-size:20.5px;line-height:20.5px;color:#1b1b1b;left:628.9px;transform:translateX(-50%) scaleX(0.8258);transform-origin:50% 50%;">IS</span>
<div style="left:600.9px;top:1680px;width:1.2px;height:27.5px;background:#555;"></div>
<div style="left:663px;top:1676px;width:47.6px;height:36px;background:#4ab2e8;border-radius:6px;"></div>
<span id="t330" style="top:1685.86px;font-size:20.5px;line-height:20.5px;color:#1b1b1b;left:686.8px;transform:translateX(-50%) scaleX(0.8233);transform-origin:50% 50%;">CF</span>
<div style="left:655.8px;top:1680px;width:1.2px;height:27.5px;background:#555;"></div>
<div style="left:724px;top:1676px;width:47.5px;height:36px;background:#4ab2e8;border-radius:6px;"></div>
<span id="t331" style="top:1685.86px;font-size:20.5px;line-height:20.5px;color:#1b1b1b;left:747.75px;transform:translateX(-50%) scaleX(0.8224);transform-origin:50% 50%;">BS</span>
<div style="left:716.7px;top:1680px;width:1.2px;height:27.5px;background:#555;"></div>
<div style="left:785.3px;top:1676px;width:114.5px;height:36px;background:#4ab2e8;border-radius:6px;"></div>
<span id="t332" style="top:1685.86px;font-size:20.5px;line-height:20.5px;color:#1b1b1b;left:842.55px;transform:translateX(-50%) scaleX(0.9597);transform-origin:50% 50%;">Scenarios</span>
<div style="left:777.8px;top:1680px;width:1.2px;height:27.5px;background:#555;"></div>
<div style="left:913px;top:1676px;width:114.6px;height:36px;background:#4ab2e8;border-radius:6px;"></div>
<span id="t333" style="top:1685.86px;font-size:20.5px;line-height:20.5px;color:#1b1b1b;left:970.3px;transform:translateX(-50%) scaleX(1.048);transform-origin:50% 50%;">Valuation</span>
<div style="left:905.8px;top:1680px;width:1.2px;height:27.5px;background:#555;"></div>
<div style="left:1041.4px;top:1676px;width:113.2px;height:36px;background:#4ab2e8;border-radius:6px;"></div>
<span id="t334" style="top:1685.86px;font-size:20.5px;line-height:20.5px;color:#1b1b1b;left:1098px;transform:translateX(-50%) scaleX(0.9918);transform-origin:50% 50%;">Summary</span>
<div style="left:1033.9px;top:1680px;width:1.2px;height:27.5px;background:#555;"></div>
<div style="left:1168px;top:1676px;width:47.5px;height:36px;background:#4ab2e8;border-radius:6px;"></div>
<span id="t335" style="top:1685.86px;font-size:20.5px;line-height:20.5px;color:#1b1b1b;left:1191.75px;transform:translateX(-50%) scaleX(0.8224);transform-origin:50% 50%;">BE</span>
<div style="left:1160.7px;top:1680px;width:1.2px;height:27.5px;background:#555;"></div>
<div style="left:1229.3px;top:1676px;width:71.4px;height:36px;background:#4ab2e8;border-radius:6px;"></div>
<span id="t336" style="top:1685.86px;font-size:20.5px;line-height:20.5px;color:#1b1b1b;left:1265px;transform:translateX(-50%) scaleX(0.9073);transform-origin:50% 50%;">ROIC</span>
<div style="left:1221.8px;top:1680px;width:1.2px;height:27.5px;background:#555;"></div>
<div style="left:1314px;top:1676px;width:85px;height:36px;background:#4ab2e8;border-radius:6px;"></div>
<span id="t337" style="top:1685.86px;font-size:20.5px;line-height:20.5px;color:#1b1b1b;left:1356.5px;transform:translateX(-50%) scaleX(0.977);transform-origin:50% 50%;">Charts</span>
<div style="left:1306.75px;top:1680px;width:1.2px;height:27.5px;background:#555;"></div>
<div style="left:1412.3px;top:1676px;width:63.3px;height:36px;background:#4ab2e8;border-radius:6px;"></div>
<span id="t338" style="top:1685.86px;font-size:20.5px;line-height:20.5px;color:#1b1b1b;left:1443.95px;transform:translateX(-50%) scaleX(0.8777);transform-origin:50% 50%;">KPIs</span>
<div style="left:1405.05px;top:1680px;width:1.2px;height:27.5px;background:#555;"></div>
<div style="left:1489.4px;top:1676px;width:168.1px;height:36px;background:#4ab2e8;border-radius:6px;"></div>
<span id="t339" style="top:1685.86px;font-size:20.5px;line-height:20.5px;color:#1b1b1b;left:1573.45px;transform:translateX(-50%) scaleX(0.9763);transform-origin:50% 50%;">Sources &amp; Uses</span>
<div style="left:1481.9px;top:1680px;width:1.2px;height:27.5px;background:#555;"></div>
<div style="left:1671.3px;top:1676px;width:82.4px;height:36px;background:#4ab2e8;border-radius:6px;"></div>
<span id="t340" style="top:1685.86px;font-size:20.5px;line-height:20.5px;color:#1b1b1b;left:1712.5px;transform:translateX(-50%) scaleX(0.9637);transform-origin:50% 50%;">Ratios</span>
<div style="left:1663.8px;top:1680px;width:1.2px;height:27.5px;background:#555;"></div>
<div style="left:1767.5px;top:1676px;width:95.3px;height:36px;background:#4ab2e8;border-radius:6px;"></div>
<span id="t341" style="top:1685.86px;font-size:20.5px;line-height:20.5px;color:#1b1b1b;left:1815.15px;transform:translateX(-50%) scaleX(1.0162);transform-origin:50% 50%;">DuPont</span>
<div style="left:1760px;top:1680px;width:1.2px;height:27.5px;background:#555;"></div>
<div style="left:1868px;top:1669.6px;width:167px;height:9.4px;background:#fff;"></div>
<div style="left:1864.5px;top:1669.6px;width:11.5px;height:20.4px;background:#0a0a0a;border-top-right-radius:8px;"></div>
<div style="left:2027px;top:1669.6px;width:11.5px;height:20.4px;background:#0a0a0a;border-top-left-radius:8px;"></div>
<div style="left:1869px;top:1680px;width:1.2px;height:27.5px;background:#555;"></div>
<div style="left:1876px;top:1669.6px;width:151px;height:42.2px;background:linear-gradient(#ffffff 45%,#cbe4f6);border-radius:0 0 7px 7px;"></div>
<span id="t342" style="top:1680.77px;font-size:20.6px;line-height:20.6px;color:#1f1f1f;left:1951.6px;transform:translateX(-50%);">Top_Revenue</span>
<div style="left:1888.2px;top:1705.3px;width:126.8px;height:2.6px;background:#1e8449;"></div>
<div style="left:2033px;top:1680px;width:1.2px;height:27.5px;background:#555;"></div>
<div style="left:2040px;top:1676px;width:32px;height:36px;background:#4ab2e8;border-radius:6px 0 0 6px;"></div>
<span id="t343" style="top:1685.86px;font-size:20.5px;line-height:20.5px;color:#1b1b1b;left:2054.5px;width:17.5px;overflow:hidden;">To</span>
<svg style="left:0px;top:0px;" width="2902" height="1762" viewBox="0 0 2902 1762"><path d="M54.3 1686 l-7.4 7 l7.4 7 M96 1686 l7.4 7 l-7.4 7" fill="none" stroke="#e0e0e0" stroke-width="1.7" stroke-linecap="round" stroke-linejoin="round"/><circle cx="140" cy="1692.5" r="1.9" fill="#e0e0e0"/><circle cx="146" cy="1692.5" r="1.9" fill="#e0e0e0"/><circle cx="152" cy="1692.5" r="1.9" fill="#e0e0e0"/><circle cx="2089.22" cy="1692.8" r="2.1" fill="#e0e0e0"/><circle cx="2095.2" cy="1692.8" r="2.1" fill="#e0e0e0"/><circle cx="2101.18" cy="1692.8" r="2.1" fill="#e0e0e0"/><path d="M2135 1693 h17 M2143.5 1684.5 v17" stroke="#e0e0e0" stroke-width="1.6"/><circle cx="2191.8" cy="1687" r="1.7" fill="#e0e0e0"/><circle cx="2191.8" cy="1693" r="1.7" fill="#e0e0e0"/><circle cx="2191.8" cy="1699" r="1.7" fill="#e0e0e0"/><rect x="2216" y="1679" width="660" height="28" rx="14" fill="#161616"/><path d="M2234 1686 v14 l-10 -7 z M2842 1686 v14 l10 -7 z" fill="#a8a8a8"/><rect x="2242" y="1687" width="508.5" height="12" rx="6" fill="#a0a0a0"/></svg>
</section>
<section id="statusbar">
<div style="left:11px;top:1718px;width:2880px;height:33px;background:#141414;"></div>
<div style="left:11px;top:1718px;width:2880px;height:1px;background:#333;"></div>
<span id="t344" style="top:1728.23px;font-size:15.8px;line-height:15.8px;color:#f0f0f0;left:27px;transform:scaleX(0.9415);transform-origin:0 50%;">Ready</span>
<span id="t345" style="top:1728.23px;font-size:15.8px;line-height:15.8px;color:#ffffff;font-weight:bold;left:173.3px;transform:scaleX(0.9933);transform-origin:0 50%;">Accessibility: Investigate</span>
<span id="t346" style="top:1728.23px;font-size:15.8px;line-height:15.8px;color:#f0f0f0;left:2859.5px;transform:translateX(-50%) scaleX(0.9899);transform-origin:50% 50%;">140%</span>
<svg style="left:0px;top:0px;" width="2902" height="1762" viewBox="0 0 2902 1762"><rect x="100" y="1727.5" width="19.6" height="15.5" rx="1" fill="none" stroke="#f0f0f0" stroke-width="1.7"/><path d="M100 1731.3 h19.6" stroke="#f0f0f0" stroke-width="1.7"/><path d="M103 1735 h6 M103 1738.3 h4.5" stroke="#f0f0f0" stroke-width="1.5"/><circle cx="114.3" cy="1739.3" r="5.6" fill="#141414" stroke="#f0f0f0" stroke-width="1.7"/><circle cx="114.3" cy="1739.3" r="2.6" fill="#f0f0f0"/><circle cx="155.6" cy="1727.6" r="2.7" fill="none" stroke="#f0f0f0" stroke-width="1.6"/><path d="M147.3 1729.5 q-1 2.5 1.5 3 l4.2 1 v4 l-3.4 6.5 q0.6 2 2.6 1 l3.4 -6.2 l1.6 3 M163.9 1729.5 q1 2.5 -1.5 3 l-4.2 1 v3.5" fill="none" stroke="#f0f0f0" stroke-width="1.6" stroke-linecap="round" stroke-linejoin="round"/><path d="M147.3 1729.5 q3.5 2.3 8.3 2.3 q4.8 0 8.3 -2.3" fill="none" stroke="#f0f0f0" stroke-width="1.6" stroke-linecap="round"/><path d="M159 1738.5 l7.5 7.5 m0 -7.5 l-7.5 7.5" stroke="#f0f0f0" stroke-width="1.7" stroke-linecap="round"/><rect x="2445" y="1719.5" width="60" height="31.5" fill="#2a2a2a"/><rect x="2465.2" y="1725.3" width="18" height="17.4" fill="none" stroke="#f5f5f5" stroke-width="2"/><path d="M2465.2 1731.1 h18 M2465.2 1736.9 h18 M2471.2 1725.3 v17.4 M2477.2 1725.3 v17.4" stroke="#f5f5f5" stroke-width="1.8"/><rect x="2525.3" y="1725.3" width="19.6" height="17.4" fill="none" stroke="#f5f5f5" stroke-width="2"/><rect x="2530.6" y="1729.4" width="9.4" height="9.4" fill="none" stroke="#f5f5f5" stroke-width="1.6"/><path d="M2533 1732.6 h4.6 M2533 1735.4 h4.6" stroke="#f5f5f5" stroke-width="1.3"/><rect x="2585" y="1725.3" width="19.6" height="17.4" fill="none" stroke="#f5f5f5" stroke-width="2"/><path d="M2585 1736.8 h13 v-11.5 M2593.2 1725.3 v11.5" fill="none" stroke="#f5f5f5" stroke-width="1.8"/><rect x="2633" y="1734.2" width="11.6" height="1.5" fill="#e0e0e0"/><rect x="2653" y="1733.9" width="148" height="2" fill="#b4b4b4"/><rect x="2725.8" y="1731" width="1.8" height="7.8" fill="#b4b4b4"/><rect x="2733" y="1726.3" width="8" height="16.2" rx="1" fill="#c4c4c4"/><path d="M2808.6 1735 h11.8 M2814.5 1729.1 v11.8" stroke="#e0e0e0" stroke-width="1.5"/></svg>
</section>
</div></body></html>
